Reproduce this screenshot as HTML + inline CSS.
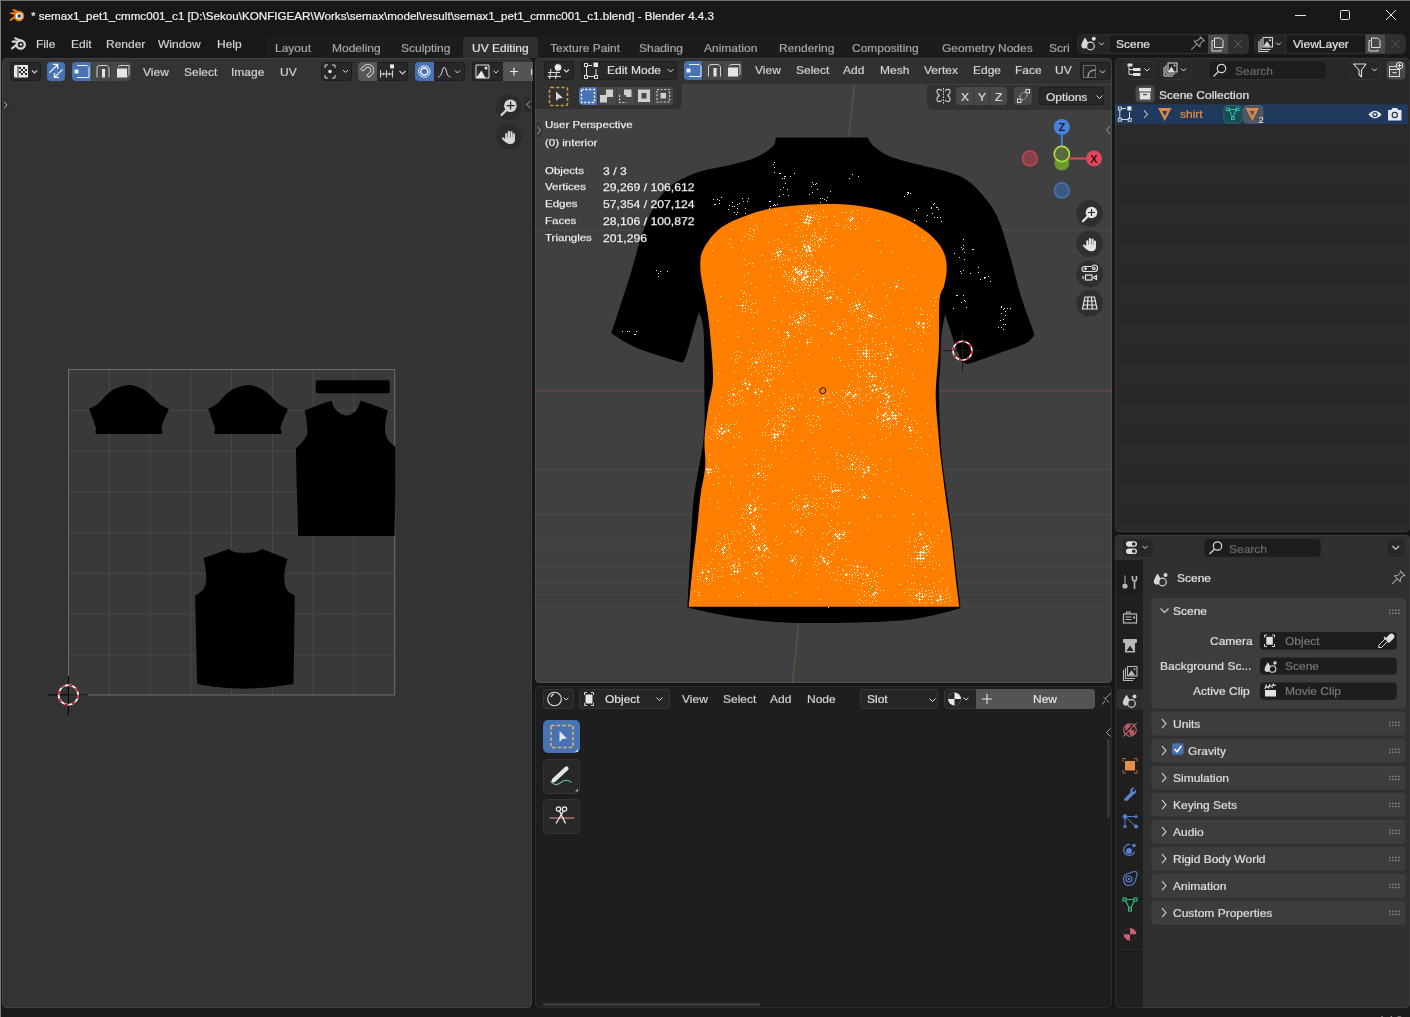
<!DOCTYPE html>
<html><head><meta charset="utf-8">
<style>
*{box-sizing:border-box;margin:0;padding:0}
html,body{width:1410px;height:1017px;overflow:hidden;background:#161616;font-family:"Liberation Sans",sans-serif;color:#d8d8d8;font-size:12px}
.a{position:absolute}
.t{position:absolute;white-space:nowrap;line-height:1;will-change:transform}
#title{left:0;top:0;width:1410px;height:29px;background:#181818;border-top:1px solid #707070}
#topbar{left:0;top:29px;width:1410px;height:29px;background:#181818}
.area{position:absolute;border-radius:4.5px;overflow:hidden}
.btn{position:absolute;border-radius:4px;height:19px}
.dk{background:#282828;box-shadow:inset 0 0 0 1px #1e1e1e}
.gr{background:#545454}
.bl{background:#4772b3}
.mt{position:absolute;will-change:transform;transform:scaleY(.88);transform-origin:0 10.16px;-webkit-text-stroke:.2px;white-space:nowrap;line-height:1;color:#d4d4d4;font-size:12px}
svg{position:absolute;overflow:visible}
</style></head><body>
<div id="title" class="a"></div>
<div id="topbar" class="a"></div>

<!-- title bar content -->
<svg style="left:0;top:0" width="40" height="60">
 <g stroke="#e87d0d" stroke-width="2.1" stroke-linecap="round" fill="none">
  <path d="M13.5 10 L18.5 12.2"/><path d="M11.2 13.3 L16 13.3"/><path d="M10.6 20 L15.3 16.5"/>
 </g>
 <circle cx="19" cy="16" r="5.2" fill="#e87d0d"/>
 <circle cx="19" cy="16" r="3.3" fill="#fff"/>
 <circle cx="19.2" cy="16" r="1.9" fill="#265787"/>
 <g stroke="#d4d4d4" stroke-width="2.1" stroke-linecap="round" fill="none">
  <path d="M15.2 38.3 L20.2 40.4"/><path d="M12.6 41.6 L17.4 41.6"/><path d="M12 48.4 L16.6 44.8"/>
  <circle cx="20.7" cy="44.6" r="4.1" stroke-width="2.3"/>
 </g>
 <circle cx="20.9" cy="44.6" r="1.3" fill="#d4d4d4"/>
</svg>
<div class="t" style="left:31px;top:10px;font-size:11.65px;color:#f2f2f2;-webkit-text-stroke:.2px">* semax1_pet1_cmmc001_c1 [D:\Sekou\KONFIGEAR\Works\semax\model\result\semax1_pet1_cmmc001_c1.blend] - Blender 4.4.3</div>
<div class="a" style="left:1295px;top:15px;width:11px;height:1px;background:#e8e8e8"></div>
<div class="a" style="left:1340px;top:10px;width:10px;height:10px;border:1px solid #e8e8e8;border-radius:1.5px"></div>
<svg style="left:1386px;top:10px" width="10" height="10"><path d="M0 0L10 10M10 0L0 10" stroke="#e8e8e8" stroke-width="1"/></svg>

<!-- top bar -->
<div class="mt" style="left:36px;top:37.7px">File</div>
<div class="mt" style="left:70.5px;top:37.7px">Edit</div>
<div class="mt" style="left:106px;top:37.7px">Render</div>
<div class="mt" style="left:158px;top:37.7px">Window</div>
<div class="mt" style="left:217px;top:37.7px">Help</div>
<div class="a" style="left:266px;top:36px;width:806px;height:22px;background:#1c1c1c;border-radius:4px 0 0 0"></div>
<div class="a" style="left:463px;top:37px;width:75px;height:21px;background:#303030;border-radius:4px 4px 0 0"></div>
<div class="mt" style="left:275px;top:41.5px;color:#a8a8a8">Layout</div>
<div class="mt" style="left:331.5px;top:41.5px;color:#a8a8a8">Modeling</div>
<div class="mt" style="left:401px;top:41.5px;color:#a8a8a8">Sculpting</div>
<div class="mt" style="left:472px;top:41.5px;color:#e4e4e4">UV Editing</div>
<div class="mt" style="left:549.5px;top:41.5px;color:#a8a8a8">Texture Paint</div>
<div class="mt" style="left:639px;top:41.5px;color:#a8a8a8">Shading</div>
<div class="mt" style="left:703.5px;top:41.5px;color:#a8a8a8">Animation</div>
<div class="mt" style="left:778.5px;top:41.5px;color:#a8a8a8">Rendering</div>
<div class="mt" style="left:852px;top:41.5px;color:#a8a8a8">Compositing</div>
<div class="mt" style="left:941.5px;top:41.5px;color:#a8a8a8">Geometry Nodes</div>
<div class="a" style="left:1049px;top:41.5px;width:20px;height:14px;overflow:hidden"><div class="mt" style="left:0;top:0;color:#a8a8a8">Scripting</div></div>

<!-- scene / viewlayer selectors -->
<svg style="left:0;top:0" width="1410" height="60">
 <rect x="1077.5" y="34.5" width="171" height="19" rx="4" fill="#1a1a1a" stroke="#333" stroke-width="1"/>
 <path d="M1081.5 34.5 H1108.8 V53.5 H1081.5 Q1077.5 53.5 1077.5 49.5 V38.5 Q1077.5 34.5 1081.5 34.5Z" fill="#252525"/>
 <rect x="1108.3" y="34.5" width="1" height="19" fill="#333"/>
 <rect x="1208.1" y="34.5" width="19.9" height="19" fill="#4a4a4a"/>
 <path d="M1228 34.5 H1244.5 Q1248.5 34.5 1248.5 38.5 V49.5 Q1248.5 53.5 1244.5 53.5 H1228Z" fill="#2f2f2f"/>
 <path d="M1085 37.5 Q1081.6 42.8 1081.4 45.3 Q1081.4 48.5 1084.6 48.5 Q1086.4 48.5 1086.9 47.4 Q1086.2 44.4 1088.2 42.7 Q1087.1 40.5 1085 37.5Z" fill="#d8d8d8"/>
 <circle cx="1090.5" cy="46" r="3.8" stroke="#d8d8d8" stroke-width="1.2" fill="none"/>
 <circle cx="1093.8" cy="38.8" r="2" fill="#d8d8d8"/>
 <path d="M1099 42.5 L1101.5 45 L1104 42.5" stroke="#d8d8d8" stroke-width="1" fill="none"/>
 <g transform="translate(1197 44) rotate(45)" stroke="#9a9a9a" stroke-width="1" fill="none" stroke-linejoin="round"><path d="M-3.8 -7.5 H3.8 M-2 -7.5 V-2.5 L-4.2 0 H4.2 L2 -2.5 V-7.5 M0 0 V8"/></g>
 <g stroke="#e0e0e0" stroke-width="1" fill="none">
  <path d="M1213.5 40.5 H1212 V51 H1221 V49.5"/>
  <path d="M1214.5 38 H1220.5 L1223 40.5 V47.5 H1214.5Z"/>
 </g>
 <path d="M1234 40 L1242 48 M1242 40 L1234 48" stroke="#5a5a5a" stroke-width="1"/>

 <rect x="1254.5" y="34.5" width="150.7" height="19" rx="4" fill="#1a1a1a" stroke="#333" stroke-width="1"/>
 <path d="M1258.5 34.5 H1285.8 V53.5 H1258.5 Q1254.5 53.5 1254.5 49.5 V38.5 Q1254.5 34.5 1258.5 34.5Z" fill="#252525"/>
 <rect x="1285.3" y="34.5" width="1" height="19" fill="#333"/>
 <rect x="1365.4" y="34.5" width="20" height="19" fill="#4a4a4a"/>
 <path d="M1385.4 34.5 H1401.2 Q1405.2 34.5 1405.2 38.5 V49.5 Q1405.2 53.5 1401.2 53.5 H1385.4Z" fill="#2f2f2f"/>
 <g stroke="#d8d8d8" stroke-width="1.1" fill="none"><path d="M1259 41 V51.5 H1268.5 M1261 39 V49.5 H1270.5"/><rect x="1263" y="37.5" width="9.5" height="9.5"/></g>
 <path d="M1263.5 46.5 L1267 41 L1270.5 46.5Z" fill="#d8d8d8"/><circle cx="1270" cy="40.2" r="1" fill="#d8d8d8"/>
 <path d="M1276 42.5 L1278.5 45 L1281 42.5" stroke="#d8d8d8" stroke-width="1" fill="none"/>
 <g stroke="#e0e0e0" stroke-width="1" fill="none">
  <path d="M1370.5 40.5 H1369 V51 H1378 V49.5"/>
  <path d="M1371.5 38 H1377.5 L1380 40.5 V47.5 H1371.5Z"/>
 </g>
 <path d="M1391.5 40 L1399.5 48 M1399.5 40 L1391.5 48" stroke="#5a5a5a" stroke-width="1"/>
</svg>
<div class="mt" style="left:1116.2px;top:37.8px;color:#e6e6e6">Scene</div>
<div class="mt" style="left:1293px;top:37.8px;color:#e6e6e6">ViewLayer</div>
<!-- Shader editor -->
<div class="area" style="left:535px;top:686px;width:577px;height:322px;background:#1e1e1e"></div>
<!-- Outliner -->
<div class="area" style="left:1115px;top:58px;width:294.5px;height:474px;background:#282828"></div>
<!-- Properties -->
<div class="area" style="left:1115px;top:535px;width:294.5px;height:473px;background:#303030"></div>
<div class="a" style="left:0;top:1008px;width:1410px;height:9px;background:#1a1a1a"></div>
<!-- UV editor -->
<div class="area" style="left:2px;top:58px;width:530px;height:950px;background:#333333"></div>

<!-- UV header -->
<div class="btn dk" style="left:9.5px;top:61.5px;width:31px;height:19px"></div>
<svg style="left:13px;top:63px" width="26" height="16" viewBox="0 0 26 16">
 <path d="M2.5 2 H15 V14.5 H2.5 Q1 14.5 1 13 V3.5 Q1 2 2.5 2Z" fill="#e6e6e6"/>
 <g fill="#282828">
  <rect x="6" y="4" width="2" height="2"/><rect x="10" y="4" width="2" height="2"/>
  <rect x="8" y="6" width="2" height="2"/><rect x="12" y="6" width="2" height="2"/>
  <rect x="6" y="8" width="2" height="2"/><rect x="10" y="8" width="2" height="2"/>
  <rect x="8" y="10" width="2" height="2"/><rect x="12" y="10" width="2" height="2"/>
  <rect x="4.5" y="3" width="1" height="11"/>
 </g>
 <path d="M19 7.5 L21.5 10 L24 7.5" stroke="#d0d0d0" stroke-width="1.1" fill="none"/>
</svg>
<div class="btn bl" style="left:47px;top:61.5px;width:18px;height:19px"></div>
<svg style="left:49px;top:63px" width="16" height="16" viewBox="0 0 16 16">
 <g stroke="#f4f4f4" stroke-width="1.3" fill="none">
  <path d="M0.5 9.6 L8.4 1.7 M4.1 1.4 H8.7 V5.8"/>
  <path d="M13.6 6.4 L5.7 14.1 M5.4 10.1 V14.4 H9.9"/>
 </g>
</svg>
<div class="btn bl" style="left:72px;top:61.5px;width:19px;height:19px;border-radius:4px 0 0 4px"></div>
<div class="btn" style="left:91px;top:61.5px;width:19.5px;height:19px;border-radius:0;background:#484848"></div>
<div class="btn" style="left:110.5px;top:61.5px;width:20px;height:19px;border-radius:0 4px 4px 0;background:#484848"></div>
<svg style="left:72px;top:61.5px" width="60" height="19" viewBox="0 0 60 19">
 <path d="M5 3.5 H15 L17 5.5 V15.5 H5" stroke="#f0f0f0" stroke-width="1" fill="none"/>
 <rect x="2.5" y="7.5" width="4" height="4" fill="#f0f0f0"/>
 <path d="M25 15.5 V6 Q25 3.5 27.5 3.5 H35 L37 5.5 V15.5" stroke="#cfcfcf" stroke-width="1" fill="none"/>
 <rect x="30" y="7" width="3" height="8.5" fill="#e6e6e6"/>
 <path d="M46 5 L48 3.5 H57 V12.5 L55 14.5" stroke="#cfcfcf" stroke-width="1" fill="none"/>
 <rect x="45" y="6.5" width="10" height="9" fill="#e6e6e6"/>
</svg>
<div class="a" style="left:90.5px;top:61.5px;width:1px;height:19px;background:#3a3a3a"></div><div class="a" style="left:110px;top:61.5px;width:1px;height:19px;background:#3a3a3a"></div>
<div class="mt" style="left:143.3px;top:66px">View</div>
<div class="mt" style="left:184.3px;top:66px">Select</div>
<div class="mt" style="left:231px;top:66px">Image</div>
<div class="mt" style="left:280px;top:66px">UV</div>

<div class="btn dk" style="left:321px;top:61.5px;width:30.5px;height:19px"></div>
<svg style="left:321px;top:61.5px" width="31" height="19" viewBox="0 0 31 19">
 <g stroke="#d8d8d8" stroke-width="1" fill="none">
  <path d="M4 6 V3 H7 M11 3 H14 V6 M14 13 V16 H11 M7 16 H4 V13"/>
  <path d="M22 8 L24.5 10.5 L27 8"/>
 </g>
 <circle cx="9" cy="9.5" r="1.8" fill="#e8e8e8"/>
</svg>
<div class="btn dk" style="left:358px;top:61.5px;width:50px;height:19px"></div>
<div class="btn gr" style="left:358px;top:61.5px;width:18.5px;height:19px;border-radius:4px 0 0 4px;background:#575757"></div>
<svg style="left:358px;top:61.5px" width="51" height="19" viewBox="0 0 51 19">
 <path transform="translate(9.9 8.2) rotate(45)" d="M-5.9 4.2 V0 A5.9 5.9 0 0 1 5.9 0 V4.2 H2.9 V0 A2.9 2.9 0 0 0 -2.9 0 V4.2 Z" stroke="#c8c8c8" stroke-width="1" fill="none"/>
 <g stroke="#d0d0d0" stroke-width="1.1" fill="none">
  <path d="M22.5 12 H34.5 M22.5 8.2 V15.6 M28.5 8.2 V15.6 M34.5 8.2 V15.6 M25.5 10.8 V13.2 M31.5 10.8 V13.2"/>
  <path d="M41.5 9 L44.5 12 L47.5 9"/>
 </g>
 <rect x="32" y="2.4" width="4" height="4" fill="#e8e8e8"/>
</svg>
<div class="btn dk" style="left:415px;top:61.5px;width:50px;height:19px"></div>
<div class="btn bl" style="left:415px;top:61.5px;width:18.5px;height:19px;border-radius:4px 0 0 4px"></div>
<svg style="left:415px;top:61.5px" width="51" height="19" viewBox="0 0 51 19">
 <circle cx="9.3" cy="9.5" r="5.8" stroke="#f0f0f0" stroke-width="1" fill="none"/>
 <circle cx="9.3" cy="9.5" r="3.6" stroke="#f0f0f0" stroke-width="1.6" fill="none"/>
 <path d="M23 15 Q26 15 27.5 8 Q29 2.5 31 8 Q32.5 15 35.5 15" stroke="#d8d8d8" stroke-width="1" fill="none"/>
 <path d="M40 8.5 L42.5 11 L45 8.5" stroke="#d8d8d8" stroke-width="1" fill="none"/>
</svg>
<div class="btn dk" style="left:472px;top:61.5px;width:35px;height:19px"></div>
<div class="btn" style="left:502.5px;top:61.5px;width:30px;height:19px;border-radius:0;background:#545454"></div>
<svg style="left:472px;top:61.5px" width="61" height="19" viewBox="0 0 61 19">
 <path d="M4 3 H17 V16 H4Z" stroke="#e0e0e0" stroke-width="1" fill="none"/>
 <path d="M4 16 L9.5 8.5 L13.5 16Z" fill="#e8e8e8"/>
 <circle cx="14" cy="6" r="1.5" fill="#e8e8e8"/>
 <path d="M21.5 8.5 L24 11 L26.5 8.5" stroke="#d8d8d8" stroke-width="1" fill="none"/>
 <path d="M38 9.5 H46 M42 5.5 V13.5" stroke="#e8e8e8" stroke-width="1.2"/>
 <rect x="59" y="7" width="1.2" height="6" fill="#d8d8d8"/>
</svg>
<div class="a" style="left:2px;top:98px;width:7px;height:14px;background:#2e2e2e;border-radius:0 4px 4px 0"></div>
<svg style="left:3px;top:101px" width="5" height="8"><path d="M1 0.5 L4 4 L1 7.5" stroke="#b0b0b0" stroke-width="1" fill="none"/></svg>
<!-- UV content -->
<svg style="left:0;top:0" width="1410" height="1017">
 <rect x="68.5" y="369.5" width="326.2" height="325.5" fill="#393939"/>
 <rect x="108.8" y="369.5" width="1" height="325.5" fill="#4a4a4a"/><rect x="68.5" y="409.8" width="326.2" height="1" fill="#4a4a4a"/><rect x="149.6" y="369.5" width="1" height="325.5" fill="#4a4a4a"/><rect x="68.5" y="450.6" width="326.2" height="1" fill="#4a4a4a"/><rect x="190.3" y="369.5" width="1" height="325.5" fill="#4a4a4a"/><rect x="68.5" y="491.3" width="326.2" height="1" fill="#4a4a4a"/><rect x="231.1" y="369.5" width="1" height="325.5" fill="#4a4a4a"/><rect x="68.5" y="532.1" width="326.2" height="1" fill="#4a4a4a"/><rect x="271.9" y="369.5" width="1" height="325.5" fill="#4a4a4a"/><rect x="68.5" y="572.9" width="326.2" height="1" fill="#4a4a4a"/><rect x="312.6" y="369.5" width="1" height="325.5" fill="#4a4a4a"/><rect x="68.5" y="613.6" width="326.2" height="1" fill="#4a4a4a"/><rect x="353.4" y="369.5" width="1" height="325.5" fill="#4a4a4a"/><rect x="68.5" y="654.4" width="326.2" height="1" fill="#4a4a4a"/>
 <rect x="68.5" y="369.5" width="326.2" height="325.5" fill="none" stroke="#6e6e6e" stroke-width="1"/>
 <path d="M89.2 408.7 C89.2 408.7 94.3 406.9 97.7 404.1 C101.1 401.3 106.1 394.8 109.8 392.0 C113.5 389.2 116.5 388.3 119.7 387.1 C122.9 385.9 125.8 384.9 128.9 384.9 C132.0 384.9 135.0 385.8 138.2 387.1 C141.4 388.4 144.6 389.9 148.1 392.7 C151.6 395.5 155.9 401.0 159.4 403.7 C162.9 406.4 169.0 409.0 169.0 409.0 C169.0 409.0 163.5 421.3 162.3 424.6 C161.1 427.9 161.6 427.7 161.6 428.9 C161.6 430.1 162.6 430.9 162.6 431.7 C162.6 432.5 161.6 433.9 161.6 433.9 C161.6 433.9 96.3 433.9 96.3 433.9 C96.3 433.9 95.2 432.6 95.2 431.7 C95.2 430.8 97.0 432.0 96.0 428.2 C95.0 424.4 89.2 408.7 89.2 408.7Z" fill="#000"/>
 <path d="M208.2 408.7 C208.2 408.7 213.3 406.9 216.7 404.1 C220.1 401.3 225.1 394.8 228.8 392.0 C232.5 389.2 235.5 388.3 238.7 387.1 C241.9 385.9 244.8 384.9 247.9 384.9 C251.0 384.9 254.0 385.8 257.2 387.1 C260.4 388.4 263.6 389.9 267.1 392.7 C270.6 395.5 274.9 401.0 278.4 403.7 C281.9 406.4 288.0 409.0 288.0 409.0 C288.0 409.0 282.5 421.3 281.3 424.6 C280.1 427.9 280.6 427.7 280.6 428.9 C280.7 430.1 281.6 430.9 281.6 431.7 C281.6 432.5 280.6 433.9 280.6 433.9 C280.6 433.9 215.3 433.9 215.3 433.9 C215.3 433.9 214.2 432.6 214.2 431.7 C214.1 430.8 216.0 432.0 215.0 428.2 C214.0 424.4 208.2 408.7 208.2 408.7Z" fill="#000"/>
 <path d="M331.3 400.6 C331.3 400.6 333.2 407.1 335.6 409.6 C338.0 412.1 342.4 415.5 345.9 415.6 C349.3 415.7 353.9 412.9 356.3 410.4 C358.8 407.9 360.6 400.6 360.6 400.6 C360.6 400.6 388.1 410.4 388.1 410.4 C388.1 410.4 385.9 417.7 385.5 421.6 C385.1 425.5 384.8 430.2 385.5 433.7 C386.2 437.1 388.2 440.1 389.8 442.3 C391.4 444.5 395.3 446.6 395.3 446.6 C395.3 446.6 395.4 475.6 395.3 490.5 C395.2 505.4 394.6 536.1 394.6 536.1 C394.6 536.1 298.3 536.1 298.3 536.1 C298.3 536.1 297.3 505.1 296.9 490.5 C296.5 475.9 296.0 448.3 296.0 448.3 C296.0 448.3 300.1 444.7 302.0 442.3 C303.9 439.9 306.5 437.4 307.2 433.7 C307.9 430.0 306.8 423.8 306.4 419.9 C306.0 416.0 304.6 410.4 304.6 410.4 C304.6 410.4 331.3 400.6 331.3 400.6Z" fill="#000"/>
 <path d="M229.0 549.1 C229.0 549.1 232.7 552.1 236.9 552.6 C241.1 553.1 250.0 552.9 254.2 552.3 C258.4 551.7 262.1 549.1 262.1 549.1 C262.1 549.1 287.5 558.9 287.5 558.9 C287.5 558.9 285.4 566.2 284.9 569.9 C284.4 573.6 284.0 577.5 284.4 580.9 C284.8 584.3 285.5 587.9 287.2 590.3 C288.9 592.7 294.8 595.4 294.8 595.4 C294.8 595.4 294.5 619.6 294.3 634.4 C294.1 649.1 293.5 683.9 293.5 683.9 C293.5 683.9 272.8 687.0 263.6 687.8 C254.4 688.6 246.3 688.7 238.5 688.6 C230.7 688.5 223.4 687.9 216.5 687.1 C209.6 686.3 197.3 683.9 197.3 683.9 C197.3 683.9 196.3 649.1 196.0 634.4 C195.7 619.7 195.2 595.8 195.2 595.8 C195.2 595.8 202.1 591.5 203.9 588.8 C205.7 586.0 205.9 582.7 206.2 579.3 C206.4 575.9 205.8 571.8 205.4 568.3 C205.0 564.8 203.6 558.1 203.6 558.1 C203.6 558.1 229.0 549.1 229.0 549.1Z" fill="#000"/>
 <rect x="315.8" y="380.3" width="74" height="12.9" rx="2.2" fill="#000"/>
 <!-- 2d cursor -->
 <path d="M48.5 694.9 H88 M68.4 675.7 V715" stroke="#000" stroke-width="1"/>
 <circle cx="68.4" cy="694.9" r="9.8" stroke="#fff" stroke-width="1.6" fill="none"/>
 <circle cx="68.4" cy="694.9" r="9.8" stroke="#c82020" stroke-width="1.6" fill="none" stroke-dasharray="3.85 3.85"/>
 <!-- nav buttons -->
 <circle cx="508.7" cy="107.1" r="12.9" fill="#2a2a2a" opacity=".85"/>
 <circle cx="508.7" cy="136.6" r="12.9" fill="#2a2a2a" opacity=".85"/>
 <circle cx="510.4" cy="105.8" r="6.3" fill="#d6d6d6"/>
 <path d="M507 109.5 L501.5 115" stroke="#d6d6d6" stroke-width="2.2" stroke-linecap="round"/>
 <path d="M510.6 101.6 V109.6 M506.6 105.6 H514.6" stroke="#1e1e1e" stroke-width="1.2"/>
 <g stroke="#d6d6d6" stroke-width="2.1" stroke-linecap="round" fill="none"><path d="M506.3 134.1 L506.3 138.6 M508.9 131.8 L508.9 138.1 M511.5 132.4 L511.5 138.1 M513.9 134.4 L513.9 139.1 M503.0 138.4 L505.9 141.2"/></g><path d="M505.3 137.6 L515.0 137.6 L514.9 140.6 Q514.5 143.9 510.2 144.0 Q506.5 144.0 505.3 141.1 Z" fill="#d6d6d6"/>
 <rect x="524" y="97" width="8" height="15" rx="3" fill="#2c2c2c"/>
 <path d="M530.5 101 L526.5 104.5 L530.5 108" stroke="#a8a8a8" stroke-width="1" fill="none"/>
</svg>
<!-- 3D viewport -->
<div class="area" style="left:535px;top:58px;width:577px;height:625px;background:#404040"></div>

<svg style="left:0;top:0" width="1410" height="1017">
 <defs><clipPath id="vpc"><rect x="535" y="58" width="577" height="625" rx="4.5"/></clipPath></defs>
 <g clip-path="url(#vpc)">
  <rect x="535" y="229.5" width="577" height="1" fill="#4a4a4a"/><rect x="535" y="468.9" width="577" height="1" fill="#4a4a4a"/><rect x="535" y="514.2" width="577" height="1" fill="#4a4a4a"/><rect x="535" y="543.5" width="577" height="1" fill="#4a4a4a"/><rect x="535" y="565.8" width="577" height="1" fill="#4a4a4a"/><rect x="535" y="581.5" width="577" height="1" fill="#4a4a4a"/><rect x="535" y="594.5" width="577" height="1" fill="#444"/><rect x="535" y="605.5" width="577" height="1" fill="#444"/>
  <rect x="535" y="390.3" width="577" height="1.3" fill="#70464c"/>
  <path d="M857 58 L792.5 683" stroke="#52703a" stroke-width="1" opacity=".85"/>
  <path d="M775.6 137.5 C775.6 137.5 867.7 137.5 867.7 137.5 C867.7 137.5 870.1 143.2 873.9 146.3 C877.6 149.5 882.5 153.3 890.2 156.4 C897.9 159.5 910.3 162.4 920.3 165.1 C930.3 167.8 942.0 169.8 950.4 172.7 C958.8 175.6 963.8 177.3 970.5 182.7 C977.2 188.1 985.6 198.2 990.6 205.3 C995.6 212.4 997.3 216.5 1000.6 225.3 C1003.9 234.1 1007.2 246.3 1010.6 258.0 C1014.0 269.7 1016.7 282.9 1020.7 295.6 C1024.7 308.3 1034.4 334.4 1034.4 334.4 C1034.4 334.4 1032.2 339.8 1025.7 343.2 C1019.2 346.6 1004.8 351.1 995.6 354.5 C986.4 357.9 970.5 363.3 970.5 363.3 C970.5 363.3 964.7 366.5 960.5 358.3 C956.3 350.1 945.2 314.2 945.2 314.2 C945.2 314.2 942.3 326.9 941.5 335.0 C940.7 343.1 940.9 353.1 940.5 363.0 C940.1 372.9 938.6 378.7 938.9 394.4 C939.1 410.1 940.4 438.9 942.0 457.3 C943.6 475.7 946.5 490.3 948.3 504.5 C950.1 518.7 951.0 525.0 953.0 542.3 C955.0 559.5 960.5 608.0 960.5 608.0 C960.5 608.0 931.9 617.5 905.7 620.0 C879.5 622.5 831.0 623.3 803.4 623.0 C775.8 622.7 759.3 620.6 740.0 618.0 C720.7 615.4 687.5 607.5 687.5 607.5 C687.5 607.5 689.9 557.8 691.0 539.0 C692.1 520.2 692.1 511.8 694.2 495.0 C696.3 478.2 701.9 455.3 703.6 438.5 C705.3 421.7 704.5 412.2 704.5 394.4 C704.5 376.6 704.5 345.1 703.6 331.5 C702.7 317.9 698.9 312.6 698.9 312.6 C698.9 312.6 697.3 317.4 695.0 325.0 C692.7 332.6 687.8 352.1 685.3 358.3 C682.8 364.5 680.3 362.0 680.3 362.0 C680.3 362.0 649.1 353.0 637.6 348.2 C626.1 343.4 611.3 333.2 611.3 333.2 C611.3 333.2 624.9 292.2 630.1 275.5 C635.3 258.8 638.0 245.4 642.6 232.8 C647.2 220.2 652.3 208.5 657.7 200.2 C663.1 191.8 668.1 187.5 675.2 182.7 C682.3 177.9 691.1 174.3 700.3 171.4 C709.5 168.5 721.2 167.4 730.4 165.1 C739.6 162.8 748.4 160.7 755.5 157.6 C762.6 154.5 769.6 149.7 773.0 146.3 C776.4 143.0 775.6 137.5 775.6 137.5Z" fill="#000"/>
  <path d="M830.0 204.0 C845.8 204.0 858.1 205.5 870.2 207.8 C882.3 210.1 893.2 213.6 902.8 217.8 C912.4 222.0 921.1 227.4 927.8 232.8 C934.5 238.2 939.8 244.5 942.9 250.4 C946.0 256.3 946.5 262.1 946.7 268.0 C946.9 273.9 945.4 280.2 944.2 285.5 C943.0 290.8 940.4 289.7 939.5 300.0 C938.6 310.3 939.5 331.5 938.9 347.2 C938.3 362.9 935.8 380.2 935.7 394.4 C935.6 408.6 937.3 420.7 938.3 432.2 C939.2 443.7 940.0 451.6 941.4 463.6 C942.8 475.7 945.0 491.9 946.7 504.5 C948.4 517.1 950.1 527.6 951.5 539.1 C952.9 550.6 953.9 562.5 955.2 573.8 C956.5 585.1 959.3 606.8 959.3 606.8 C959.3 606.8 688.8 606.8 688.8 606.8 C688.8 606.8 691.2 580.9 692.6 567.5 C694.0 554.1 696.0 538.7 697.3 526.6 C698.6 514.5 699.2 505.0 700.5 495.0 C701.8 485.0 704.5 476.2 705.2 466.8 C705.9 457.4 704.0 448.5 704.5 438.5 C705.0 428.5 706.9 417.0 708.3 407.0 C709.7 397.0 712.7 391.3 713.0 378.7 C713.3 366.1 711.0 343.8 709.9 331.5 C708.8 319.2 707.7 312.7 706.5 305.0 C705.3 297.3 703.8 291.7 702.8 285.5 C701.8 279.3 700.3 273.9 700.3 268.0 C700.3 262.1 699.9 256.7 702.8 250.4 C705.7 244.1 711.6 235.7 717.9 230.3 C724.2 224.9 730.9 221.6 740.5 217.8 C750.1 214.1 760.7 210.1 775.6 207.8 C790.5 205.5 814.2 204.0 830.0 204.0Z" fill="#ff8000"/><path d="M694 591h1v1h-1zM695 600h1v1h-1zM697 561h1v1h-1zM697 576h1v1h-1zM697 579h1v1h-1zM698 564h1v1h-1zM698 582h1v1h-1zM698 592h1v1h-1zM699 573h1v1h-1zM699 595h1v1h-1zM700 576h1v1h-1zM700 579h1v1h-1zM702 569h1v1h-1zM703 581h1v1h-1zM705 569h1v1h-1zM706 539h1v1h-1zM706 575h1v1h-1zM706 581h1v1h-1zM707 565h1v1h-1zM707 584h1v1h-1zM708 475h1v1h-1zM709 437h1v1h-1zM709 455h1v1h-1zM709 459h1v1h-1zM709 478h1v1h-1zM709 498h1v1h-1zM709 580h1v1h-1zM710 412h1v1h-1zM710 562h1v1h-1zM710 583h1v1h-1zM711 242h1v1h-1zM711 427h1v1h-1zM711 439h1v1h-1zM711 472h1v1h-1zM711 550h1v1h-1zM711 568h1v1h-1zM711 578h1v1h-1zM712 250h1v1h-1zM712 559h1v1h-1zM712 574h1v1h-1zM712 577h1v1h-1zM712 580h1v1h-1zM713 425h1v1h-1zM713 429h1v1h-1zM713 433h1v1h-1zM713 484h1v1h-1zM714 285h1v1h-1zM714 471h1v1h-1zM714 568h1v1h-1zM715 418h1v1h-1zM715 422h1v1h-1zM715 431h1v1h-1zM715 467h1v1h-1zM715 547h1v1h-1zM715 551h1v1h-1zM716 434h1v1h-1zM716 465h1v1h-1zM716 545h1v1h-1zM717 320h1v1h-1zM717 429h1v1h-1zM717 433h1v1h-1zM717 437h1v1h-1zM717 438h1v1h-1zM717 471h1v1h-1zM717 502h1v1h-1zM717 549h1v1h-1zM717 570h1v1h-1zM718 373h1v1h-1zM718 468h1v1h-1zM718 477h1v1h-1zM718 483h1v1h-1zM718 507h1v1h-1zM718 533h1v1h-1zM718 541h1v1h-1zM718 545h1v1h-1zM718 576h1v1h-1zM719 414h1v1h-1zM719 426h1v1h-1zM719 435h1v1h-1zM719 551h1v1h-1zM719 564h1v1h-1zM719 595h1v1h-1zM720 296h1v1h-1zM720 439h1v1h-1zM720 543h1v1h-1zM721 397h1v1h-1zM721 406h1v1h-1zM721 424h1v1h-1zM721 538h1v1h-1zM721 554h1v1h-1zM721 576h1v1h-1zM722 437h1v1h-1zM722 567h1v1h-1zM722 570h1v1h-1zM723 339h1v1h-1zM723 433h1v1h-1zM723 551h1v1h-1zM723 556h1v1h-1zM723 559h1v1h-1zM723 587h1v1h-1zM724 476h1v1h-1zM724 535h1v1h-1zM724 536h1v1h-1zM724 538h1v1h-1zM725 544h1v1h-1zM726 424h1v1h-1zM726 428h1v1h-1zM726 441h1v1h-1zM726 465h1v1h-1zM726 550h1v1h-1zM726 558h1v1h-1zM727 400h1v1h-1zM727 534h1v1h-1zM727 537h1v1h-1zM727 556h1v1h-1zM727 567h1v1h-1zM728 391h1v1h-1zM728 395h1v1h-1zM728 402h1v1h-1zM728 426h1v1h-1zM728 540h1v1h-1zM728 543h1v1h-1zM728 548h1v1h-1zM728 563h1v1h-1zM729 243h1v1h-1zM729 316h1v1h-1zM729 399h1v1h-1zM729 410h1v1h-1zM729 500h1v1h-1zM729 544h1v1h-1zM729 546h1v1h-1zM729 553h1v1h-1zM729 557h1v1h-1zM730 239h1v1h-1zM730 307h1v1h-1zM730 393h1v1h-1zM730 404h1v1h-1zM730 424h1v1h-1zM730 432h1v1h-1zM730 481h1v1h-1zM730 483h1v1h-1zM730 566h1v1h-1zM730 574h1v1h-1zM731 358h1v1h-1zM731 397h1v1h-1zM731 543h1v1h-1zM731 555h1v1h-1zM731 568h1v1h-1zM731 569h1v1h-1zM731 574h1v1h-1zM732 229h1v1h-1zM732 247h1v1h-1zM732 390h1v1h-1zM732 475h1v1h-1zM732 515h1v1h-1zM732 531h1v1h-1zM733 384h1v1h-1zM733 388h1v1h-1zM733 399h1v1h-1zM733 405h1v1h-1zM733 447h1v1h-1zM733 487h1v1h-1zM733 490h1v1h-1zM733 571h1v1h-1zM734 352h1v1h-1zM734 372h1v1h-1zM734 403h1v1h-1zM734 424h1v1h-1zM734 437h1v1h-1zM734 534h1v1h-1zM734 540h1v1h-1zM734 550h1v1h-1zM734 561h1v1h-1zM734 567h1v1h-1zM734 568h1v1h-1zM734 574h1v1h-1zM734 580h1v1h-1zM735 359h1v1h-1zM735 361h1v1h-1zM735 388h1v1h-1zM735 396h1v1h-1zM735 563h1v1h-1zM736 305h1v1h-1zM736 355h1v1h-1zM736 362h1v1h-1zM736 400h1v1h-1zM736 422h1v1h-1zM736 434h1v1h-1zM737 331h1v1h-1zM737 351h1v1h-1zM737 358h1v1h-1zM737 393h1v1h-1zM737 404h1v1h-1zM737 531h1v1h-1zM737 566h1v1h-1zM737 568h1v1h-1zM737 573h1v1h-1zM737 596h1v1h-1zM738 336h1v1h-1zM738 437h1v1h-1zM738 497h1v1h-1zM738 559h1v1h-1zM738 562h1v1h-1zM738 565h1v1h-1zM738 569h1v1h-1zM738 582h1v1h-1zM739 305h1v1h-1zM739 391h1v1h-1zM739 395h1v1h-1zM739 432h1v1h-1zM739 436h1v1h-1zM739 533h1v1h-1zM739 558h1v1h-1zM739 563h1v1h-1zM739 565h1v1h-1zM740 299h1v1h-1zM740 356h1v1h-1zM740 399h1v1h-1zM740 524h1v1h-1zM740 565h1v1h-1zM740 568h1v1h-1zM740 571h1v1h-1zM740 595h1v1h-1zM741 240h1v1h-1zM741 290h1v1h-1zM741 352h1v1h-1zM741 381h1v1h-1zM741 390h1v1h-1zM741 403h1v1h-1zM741 438h1v1h-1zM741 517h1v1h-1zM741 540h1v1h-1zM742 308h1v1h-1zM742 311h1v1h-1zM742 384h1v1h-1zM742 390h1v1h-1zM742 397h1v1h-1zM742 508h1v1h-1zM742 514h1v1h-1zM743 249h1v1h-1zM743 293h1v1h-1zM743 296h1v1h-1zM743 302h1v1h-1zM743 401h1v1h-1zM743 512h1v1h-1zM743 518h1v1h-1zM743 568h1v1h-1zM743 592h1v1h-1zM744 236h1v1h-1zM744 259h1v1h-1zM744 275h1v1h-1zM744 292h1v1h-1zM744 380h1v1h-1zM744 458h1v1h-1zM744 530h1v1h-1zM744 552h1v1h-1zM744 562h1v1h-1zM744 578h1v1h-1zM745 233h1v1h-1zM745 282h1v1h-1zM745 305h1v1h-1zM745 308h1v1h-1zM745 311h1v1h-1zM745 378h1v1h-1zM745 403h1v1h-1zM745 509h1v1h-1zM745 518h1v1h-1zM745 521h1v1h-1zM745 536h1v1h-1zM746 264h1v1h-1zM746 294h1v1h-1zM746 300h1v1h-1zM746 302h1v1h-1zM746 385h1v1h-1zM746 464h1v1h-1zM746 506h1v1h-1zM746 513h1v1h-1zM746 577h1v1h-1zM747 361h1v1h-1zM747 480h1v1h-1zM747 504h1v1h-1zM747 510h1v1h-1zM747 517h1v1h-1zM747 543h1v1h-1zM747 562h1v1h-1zM748 234h1v1h-1zM748 273h1v1h-1zM748 306h1v1h-1zM748 309h1v1h-1zM748 322h1v1h-1zM748 368h1v1h-1zM748 381h1v1h-1zM748 475h1v1h-1zM748 526h1v1h-1zM749 231h1v1h-1zM749 238h1v1h-1zM749 263h1v1h-1zM749 300h1v1h-1zM749 494h1v1h-1zM749 514h1v1h-1zM749 528h1v1h-1zM749 541h1v1h-1zM749 546h1v1h-1zM750 228h1v1h-1zM750 235h1v1h-1zM750 295h1v1h-1zM750 350h1v1h-1zM750 492h1v1h-1zM750 519h1v1h-1zM750 532h1v1h-1zM751 217h1v1h-1zM751 283h1v1h-1zM751 304h1v1h-1zM751 309h1v1h-1zM751 312h1v1h-1zM751 359h1v1h-1zM751 366h1v1h-1zM751 374h1v1h-1zM751 509h1v1h-1zM751 523h1v1h-1zM751 524h1v1h-1zM751 547h1v1h-1zM751 548h1v1h-1zM752 239h1v1h-1zM752 263h1v1h-1zM752 303h1v1h-1zM752 328h1v1h-1zM752 343h1v1h-1zM752 357h1v1h-1zM752 363h1v1h-1zM752 475h1v1h-1zM752 483h1v1h-1zM752 530h1v1h-1zM752 535h1v1h-1zM752 540h1v1h-1zM752 546h1v1h-1zM752 559h1v1h-1zM752 574h1v1h-1zM753 229h1v1h-1zM753 236h1v1h-1zM753 266h1v1h-1zM753 317h1v1h-1zM753 500h1v1h-1zM753 518h1v1h-1zM753 522h1v1h-1zM753 531h1v1h-1zM753 550h1v1h-1zM753 567h1v1h-1zM754 230h1v1h-1zM754 233h1v1h-1zM754 312h1v1h-1zM754 361h1v1h-1zM754 367h1v1h-1zM754 464h1v1h-1zM754 473h1v1h-1zM754 477h1v1h-1zM754 504h1v1h-1zM754 517h1v1h-1zM754 533h1v1h-1zM754 561h1v1h-1zM754 572h1v1h-1zM754 576h1v1h-1zM755 287h1v1h-1zM755 303h1v1h-1zM755 351h1v1h-1zM755 358h1v1h-1zM755 371h1v1h-1zM755 385h1v1h-1zM755 389h1v1h-1zM755 454h1v1h-1zM755 501h1v1h-1zM755 515h1v1h-1zM755 524h1v1h-1zM755 534h1v1h-1zM755 549h1v1h-1zM755 565h1v1h-1zM755 569h1v1h-1zM755 603h1v1h-1zM756 225h1v1h-1zM756 369h1v1h-1zM756 394h1v1h-1zM756 450h1v1h-1zM756 516h1v1h-1zM756 535h1v1h-1zM756 540h1v1h-1zM756 544h1v1h-1zM756 555h1v1h-1zM756 559h1v1h-1zM757 228h1v1h-1zM757 310h1v1h-1zM757 313h1v1h-1zM757 381h1v1h-1zM757 405h1v1h-1zM757 488h1v1h-1zM757 498h1v1h-1zM757 512h1v1h-1zM757 519h1v1h-1zM757 578h1v1h-1zM758 353h1v1h-1zM758 359h1v1h-1zM758 373h1v1h-1zM758 388h1v1h-1zM758 389h1v1h-1zM758 464h1v1h-1zM758 468h1v1h-1zM758 477h1v1h-1zM758 496h1v1h-1zM758 509h1v1h-1zM758 516h1v1h-1zM758 533h1v1h-1zM758 557h1v1h-1zM758 571h1v1h-1zM758 581h1v1h-1zM759 357h1v1h-1zM759 394h1v1h-1zM759 397h1v1h-1zM759 402h1v1h-1zM759 507h1v1h-1zM759 525h1v1h-1zM759 534h1v1h-1zM759 538h1v1h-1zM760 354h1v1h-1zM760 361h1v1h-1zM760 475h1v1h-1zM760 516h1v1h-1zM760 545h1v1h-1zM760 564h1v1h-1zM760 573h1v1h-1zM761 458h1v1h-1zM761 466h1v1h-1zM761 470h1v1h-1zM761 504h1v1h-1zM761 531h1v1h-1zM761 556h1v1h-1zM761 577h1v1h-1zM761 581h1v1h-1zM762 255h1v1h-1zM762 351h1v1h-1zM762 358h1v1h-1zM762 366h1v1h-1zM762 371h1v1h-1zM762 432h1v1h-1zM762 435h1v1h-1zM762 508h1v1h-1zM762 543h1v1h-1zM762 547h1v1h-1zM762 555h1v1h-1zM762 566h1v1h-1zM763 355h1v1h-1zM763 362h1v1h-1zM763 375h1v1h-1zM763 450h1v1h-1zM763 473h1v1h-1zM763 477h1v1h-1zM763 529h1v1h-1zM763 539h1v1h-1zM763 554h1v1h-1zM763 578h1v1h-1zM764 353h1v1h-1zM764 381h1v1h-1zM764 459h1v1h-1zM764 485h1v1h-1zM764 521h1v1h-1zM764 560h1v1h-1zM765 218h1v1h-1zM765 261h1v1h-1zM765 399h1v1h-1zM765 426h1v1h-1zM765 432h1v1h-1zM765 435h1v1h-1zM765 466h1v1h-1zM765 475h1v1h-1zM765 479h1v1h-1zM765 509h1v1h-1zM765 537h1v1h-1zM765 541h1v1h-1zM765 556h1v1h-1zM766 350h1v1h-1zM766 357h1v1h-1zM766 370h1v1h-1zM766 377h1v1h-1zM766 410h1v1h-1zM766 586h1v1h-1zM767 361h1v1h-1zM767 424h1v1h-1zM767 475h1v1h-1zM768 242h1v1h-1zM768 328h1v1h-1zM768 353h1v1h-1zM768 365h1v1h-1zM768 373h1v1h-1zM768 383h1v1h-1zM768 395h1v1h-1zM768 420h1v1h-1zM768 423h1v1h-1zM768 435h1v1h-1zM768 465h1v1h-1zM768 550h1v1h-1zM768 557h1v1h-1zM769 285h1v1h-1zM769 341h1v1h-1zM769 386h1v1h-1zM769 557h1v1h-1zM770 276h1v1h-1zM770 355h1v1h-1zM770 369h1v1h-1zM770 374h1v1h-1zM770 379h1v1h-1zM770 385h1v1h-1zM770 467h1v1h-1zM770 552h1v1h-1zM771 253h1v1h-1zM771 268h1v1h-1zM771 353h1v1h-1zM771 359h1v1h-1zM771 365h1v1h-1zM771 366h1v1h-1zM771 373h1v1h-1zM771 380h1v1h-1zM771 429h1v1h-1zM771 432h1v1h-1zM771 434h1v1h-1zM771 438h1v1h-1zM771 464h1v1h-1zM771 572h1v1h-1zM772 259h1v1h-1zM772 441h1v1h-1zM773 367h1v1h-1zM773 378h1v1h-1zM773 393h1v1h-1zM773 418h1v1h-1zM773 427h1v1h-1zM773 594h1v1h-1zM774 240h1v1h-1zM774 253h1v1h-1zM774 297h1v1h-1zM774 300h1v1h-1zM774 320h1v1h-1zM774 328h1v1h-1zM774 367h1v1h-1zM774 369h1v1h-1zM774 425h1v1h-1zM774 428h1v1h-1zM774 429h1v1h-1zM774 503h1v1h-1zM775 211h1v1h-1zM775 256h1v1h-1zM775 259h1v1h-1zM775 361h1v1h-1zM775 403h1v1h-1zM775 423h1v1h-1zM775 430h1v1h-1zM775 436h1v1h-1zM775 440h1v1h-1zM775 446h1v1h-1zM775 449h1v1h-1zM775 539h1v1h-1zM776 249h1v1h-1zM776 536h1v1h-1zM776 555h1v1h-1zM776 579h1v1h-1zM777 247h1v1h-1zM777 252h1v1h-1zM777 291h1v1h-1zM777 367h1v1h-1zM777 408h1v1h-1zM777 415h1v1h-1zM777 431h1v1h-1zM777 433h1v1h-1zM777 437h1v1h-1zM777 544h1v1h-1zM778 239h1v1h-1zM778 258h1v1h-1zM778 332h1v1h-1zM778 353h1v1h-1zM778 360h1v1h-1zM778 374h1v1h-1zM778 417h1v1h-1zM778 428h1v1h-1zM778 435h1v1h-1zM778 440h1v1h-1zM778 509h1v1h-1zM779 248h1v1h-1zM779 261h1v1h-1zM779 337h1v1h-1zM779 365h1v1h-1zM779 370h1v1h-1zM779 409h1v1h-1zM779 424h1v1h-1zM779 431h1v1h-1zM780 218h1v1h-1zM780 254h1v1h-1zM780 267h1v1h-1zM780 361h1v1h-1zM780 398h1v1h-1zM780 410h1v1h-1zM780 420h1v1h-1zM780 431h1v1h-1zM780 433h1v1h-1zM781 242h1v1h-1zM781 257h1v1h-1zM781 321h1v1h-1zM781 345h1v1h-1zM781 368h1v1h-1zM781 402h1v1h-1zM781 407h1v1h-1zM781 423h1v1h-1zM781 440h1v1h-1zM781 445h1v1h-1zM781 452h1v1h-1zM781 543h1v1h-1zM782 248h1v1h-1zM782 260h1v1h-1zM782 390h1v1h-1zM782 411h1v1h-1zM782 415h1v1h-1zM782 419h1v1h-1zM782 486h1v1h-1zM783 254h1v1h-1zM783 264h1v1h-1zM783 275h1v1h-1zM783 310h1v1h-1zM783 339h1v1h-1zM783 342h1v1h-1zM783 351h1v1h-1zM783 373h1v1h-1zM783 404h1v1h-1zM783 431h1v1h-1zM783 432h1v1h-1zM783 434h1v1h-1zM784 271h1v1h-1zM784 276h1v1h-1zM784 286h1v1h-1zM784 332h1v1h-1zM784 345h1v1h-1zM784 356h1v1h-1zM784 409h1v1h-1zM784 414h1v1h-1zM784 421h1v1h-1zM784 428h1v1h-1zM784 525h1v1h-1zM785 214h1v1h-1zM785 247h1v1h-1zM785 255h1v1h-1zM785 259h1v1h-1zM785 272h1v1h-1zM785 394h1v1h-1zM785 398h1v1h-1zM785 402h1v1h-1zM785 406h1v1h-1zM785 424h1v1h-1zM785 458h1v1h-1zM786 224h1v1h-1zM786 274h1v1h-1zM786 338h1v1h-1zM786 415h1v1h-1zM786 420h1v1h-1zM786 434h1v1h-1zM786 558h1v1h-1zM787 244h1v1h-1zM787 280h1v1h-1zM787 335h1v1h-1zM787 366h1v1h-1zM787 426h1v1h-1zM787 440h1v1h-1zM788 259h1v1h-1zM788 260h1v1h-1zM788 278h1v1h-1zM788 291h1v1h-1zM788 337h1v1h-1zM788 362h1v1h-1zM788 408h1v1h-1zM788 412h1v1h-1zM789 234h1v1h-1zM789 249h1v1h-1zM789 272h1v1h-1zM789 276h1v1h-1zM789 316h1v1h-1zM789 324h1v1h-1zM789 342h1v1h-1zM789 397h1v1h-1zM789 417h1v1h-1zM789 421h1v1h-1zM790 258h1v1h-1zM790 280h1v1h-1zM790 317h1v1h-1zM790 362h1v1h-1zM790 406h1v1h-1zM790 503h1v1h-1zM790 541h1v1h-1zM790 555h1v1h-1zM790 561h1v1h-1zM790 595h1v1h-1zM791 249h1v1h-1zM791 274h1v1h-1zM791 279h1v1h-1zM791 288h1v1h-1zM791 399h1v1h-1zM791 524h1v1h-1zM791 532h1v1h-1zM791 557h1v1h-1zM792 252h1v1h-1zM792 266h1v1h-1zM792 271h1v1h-1zM792 277h1v1h-1zM792 290h1v1h-1zM792 323h1v1h-1zM792 324h1v1h-1zM792 381h1v1h-1zM792 430h1v1h-1zM792 489h1v1h-1zM792 501h1v1h-1zM792 507h1v1h-1zM792 509h1v1h-1zM792 577h1v1h-1zM793 267h1v1h-1zM793 270h1v1h-1zM793 275h1v1h-1zM793 277h1v1h-1zM793 281h1v1h-1zM793 303h1v1h-1zM793 314h1v1h-1zM793 317h1v1h-1zM793 397h1v1h-1zM793 401h1v1h-1zM793 527h1v1h-1zM793 531h1v1h-1zM793 575h1v1h-1zM794 257h1v1h-1zM794 281h1v1h-1zM794 283h1v1h-1zM794 320h1v1h-1zM794 336h1v1h-1zM794 405h1v1h-1zM794 410h1v1h-1zM794 416h1v1h-1zM794 505h1v1h-1zM794 556h1v1h-1zM794 558h1v1h-1zM794 563h1v1h-1zM795 247h1v1h-1zM795 251h1v1h-1zM795 261h1v1h-1zM795 267h1v1h-1zM795 272h1v1h-1zM795 278h1v1h-1zM795 283h1v1h-1zM795 291h1v1h-1zM795 310h1v1h-1zM795 320h1v1h-1zM795 322h1v1h-1zM795 327h1v1h-1zM795 514h1v1h-1zM795 525h1v1h-1zM795 533h1v1h-1zM795 559h1v1h-1zM795 565h1v1h-1zM795 592h1v1h-1zM796 223h1v1h-1zM796 231h1v1h-1zM796 235h1v1h-1zM796 250h1v1h-1zM796 258h1v1h-1zM796 268h1v1h-1zM796 271h1v1h-1zM796 313h1v1h-1zM796 348h1v1h-1zM796 354h1v1h-1zM796 450h1v1h-1zM796 497h1v1h-1zM796 504h1v1h-1zM796 555h1v1h-1zM796 562h1v1h-1zM797 267h1v1h-1zM797 269h1v1h-1zM797 276h1v1h-1zM797 280h1v1h-1zM797 282h1v1h-1zM797 319h1v1h-1zM797 321h1v1h-1zM797 373h1v1h-1zM797 395h1v1h-1zM797 397h1v1h-1zM797 509h1v1h-1zM797 510h1v1h-1zM798 212h1v1h-1zM798 227h1v1h-1zM798 255h1v1h-1zM798 271h1v1h-1zM798 278h1v1h-1zM798 285h1v1h-1zM798 325h1v1h-1zM798 506h1v1h-1zM799 266h1v1h-1zM799 270h1v1h-1zM799 271h1v1h-1zM799 290h1v1h-1zM799 312h1v1h-1zM799 315h1v1h-1zM799 329h1v1h-1zM799 341h1v1h-1zM799 394h1v1h-1zM799 409h1v1h-1zM799 495h1v1h-1zM799 509h1v1h-1zM799 570h1v1h-1zM800 219h1v1h-1zM800 236h1v1h-1zM800 252h1v1h-1zM800 257h1v1h-1zM800 269h1v1h-1zM800 270h1v1h-1zM800 287h1v1h-1zM800 316h1v1h-1zM800 333h1v1h-1zM800 403h1v1h-1zM800 518h1v1h-1zM800 529h1v1h-1zM800 533h1v1h-1zM800 563h1v1h-1zM801 215h1v1h-1zM801 230h1v1h-1zM801 259h1v1h-1zM801 263h1v1h-1zM801 267h1v1h-1zM801 274h1v1h-1zM801 276h1v1h-1zM801 280h1v1h-1zM801 283h1v1h-1zM801 289h1v1h-1zM801 299h1v1h-1zM801 313h1v1h-1zM801 321h1v1h-1zM801 324h1v1h-1zM801 535h1v1h-1zM801 557h1v1h-1zM802 209h1v1h-1zM802 225h1v1h-1zM802 241h1v1h-1zM802 248h1v1h-1zM802 249h1v1h-1zM802 255h1v1h-1zM802 285h1v1h-1zM802 318h1v1h-1zM802 396h1v1h-1zM802 440h1v1h-1zM802 508h1v1h-1zM802 514h1v1h-1zM802 527h1v1h-1zM802 531h1v1h-1zM803 219h1v1h-1zM803 222h1v1h-1zM803 236h1v1h-1zM803 244h1v1h-1zM803 265h1v1h-1zM803 270h1v1h-1zM803 275h1v1h-1zM803 278h1v1h-1zM803 282h1v1h-1zM803 292h1v1h-1zM803 304h1v1h-1zM803 311h1v1h-1zM803 317h1v1h-1zM803 322h1v1h-1zM803 382h1v1h-1zM803 510h1v1h-1zM804 213h1v1h-1zM804 240h1v1h-1zM804 253h1v1h-1zM804 261h1v1h-1zM804 270h1v1h-1zM804 276h1v1h-1zM804 279h1v1h-1zM804 282h1v1h-1zM804 288h1v1h-1zM804 320h1v1h-1zM804 499h1v1h-1zM804 513h1v1h-1zM804 529h1v1h-1zM805 210h1v1h-1zM805 244h1v1h-1zM805 247h1v1h-1zM805 266h1v1h-1zM805 267h1v1h-1zM805 280h1v1h-1zM805 284h1v1h-1zM805 285h1v1h-1zM805 312h1v1h-1zM805 389h1v1h-1zM805 498h1v1h-1zM805 506h1v1h-1zM805 507h1v1h-1zM805 539h1v1h-1zM806 235h1v1h-1zM806 248h1v1h-1zM806 255h1v1h-1zM806 256h1v1h-1zM806 263h1v1h-1zM806 269h1v1h-1zM806 272h1v1h-1zM806 277h1v1h-1zM806 280h1v1h-1zM806 323h1v1h-1zM806 329h1v1h-1zM806 416h1v1h-1zM806 495h1v1h-1zM806 502h1v1h-1zM806 509h1v1h-1zM806 516h1v1h-1zM806 580h1v1h-1zM807 213h1v1h-1zM807 229h1v1h-1zM807 241h1v1h-1zM807 252h1v1h-1zM807 264h1v1h-1zM807 281h1v1h-1zM807 282h1v1h-1zM807 288h1v1h-1zM807 302h1v1h-1zM807 339h1v1h-1zM807 345h1v1h-1zM807 423h1v1h-1zM807 498h1v1h-1zM807 573h1v1h-1zM808 210h1v1h-1zM808 226h1v1h-1zM808 255h1v1h-1zM808 265h1v1h-1zM808 268h1v1h-1zM808 271h1v1h-1zM808 285h1v1h-1zM808 288h1v1h-1zM808 291h1v1h-1zM808 314h1v1h-1zM808 321h1v1h-1zM808 354h1v1h-1zM808 415h1v1h-1zM808 419h1v1h-1zM808 501h1v1h-1zM808 508h1v1h-1zM808 512h1v1h-1zM808 514h1v1h-1zM809 242h1v1h-1zM809 265h1v1h-1zM809 285h1v1h-1zM809 318h1v1h-1zM809 325h1v1h-1zM809 425h1v1h-1zM809 430h1v1h-1zM810 214h1v1h-1zM810 239h1v1h-1zM810 244h1v1h-1zM810 247h1v1h-1zM810 251h1v1h-1zM810 254h1v1h-1zM810 259h1v1h-1zM810 268h1v1h-1zM810 270h1v1h-1zM810 276h1v1h-1zM810 279h1v1h-1zM810 281h1v1h-1zM810 282h1v1h-1zM810 283h1v1h-1zM810 285h1v1h-1zM810 339h1v1h-1zM810 342h1v1h-1zM810 398h1v1h-1zM810 421h1v1h-1zM810 484h1v1h-1zM811 208h1v1h-1zM811 223h1v1h-1zM811 251h1v1h-1zM811 254h1v1h-1zM811 280h1v1h-1zM811 301h1v1h-1zM811 337h1v1h-1zM811 424h1v1h-1zM811 506h1v1h-1zM811 513h1v1h-1zM811 533h1v1h-1zM812 220h1v1h-1zM812 235h1v1h-1zM812 236h1v1h-1zM812 240h1v1h-1zM812 245h1v1h-1zM812 250h1v1h-1zM812 255h1v1h-1zM812 257h1v1h-1zM812 267h1v1h-1zM812 273h1v1h-1zM812 278h1v1h-1zM812 419h1v1h-1zM812 432h1v1h-1zM812 502h1v1h-1zM812 506h1v1h-1zM813 215h1v1h-1zM813 217h1v1h-1zM813 249h1v1h-1zM813 270h1v1h-1zM813 275h1v1h-1zM813 276h1v1h-1zM813 279h1v1h-1zM813 282h1v1h-1zM813 284h1v1h-1zM813 285h1v1h-1zM813 294h1v1h-1zM813 415h1v1h-1zM813 426h1v1h-1zM813 448h1v1h-1zM813 557h1v1h-1zM814 212h1v1h-1zM814 229h1v1h-1zM814 236h1v1h-1zM814 239h1v1h-1zM814 242h1v1h-1zM814 246h1v1h-1zM814 273h1v1h-1zM814 281h1v1h-1zM814 282h1v1h-1zM814 288h1v1h-1zM814 291h1v1h-1zM814 311h1v1h-1zM814 324h1v1h-1zM814 397h1v1h-1zM814 462h1v1h-1zM814 476h1v1h-1zM814 498h1v1h-1zM814 505h1v1h-1zM814 564h1v1h-1zM815 218h1v1h-1zM815 232h1v1h-1zM815 234h1v1h-1zM815 244h1v1h-1zM815 250h1v1h-1zM815 262h1v1h-1zM815 325h1v1h-1zM815 391h1v1h-1zM815 452h1v1h-1zM815 479h1v1h-1zM815 508h1v1h-1zM815 514h1v1h-1zM815 545h1v1h-1zM815 561h1v1h-1zM816 215h1v1h-1zM816 237h1v1h-1zM816 270h1v1h-1zM816 271h1v1h-1zM816 276h1v1h-1zM816 388h1v1h-1zM816 420h1v1h-1zM816 424h1v1h-1zM816 499h1v1h-1zM816 503h1v1h-1zM816 510h1v1h-1zM816 558h1v1h-1zM816 574h1v1h-1zM817 240h1v1h-1zM817 279h1v1h-1zM817 288h1v1h-1zM817 291h1v1h-1zM817 397h1v1h-1zM817 400h1v1h-1zM817 416h1v1h-1zM817 458h1v1h-1zM817 549h1v1h-1zM817 565h1v1h-1zM818 219h1v1h-1zM818 222h1v1h-1zM818 241h1v1h-1zM818 244h1v1h-1zM818 247h1v1h-1zM818 269h1v1h-1zM818 273h1v1h-1zM818 276h1v1h-1zM818 293h1v1h-1zM818 315h1v1h-1zM818 345h1v1h-1zM818 406h1v1h-1zM818 416h1v1h-1zM818 473h1v1h-1zM818 476h1v1h-1zM818 479h1v1h-1zM818 506h1v1h-1zM818 562h1v1h-1zM818 569h1v1h-1zM818 588h1v1h-1zM819 216h1v1h-1zM819 237h1v1h-1zM819 245h1v1h-1zM819 246h1v1h-1zM819 277h1v1h-1zM819 278h1v1h-1zM819 281h1v1h-1zM819 418h1v1h-1zM819 486h1v1h-1zM820 225h1v1h-1zM820 266h1v1h-1zM820 398h1v1h-1zM820 425h1v1h-1zM820 428h1v1h-1zM820 485h1v1h-1zM820 498h1v1h-1zM820 556h1v1h-1zM820 563h1v1h-1zM820 599h1v1h-1zM821 242h1v1h-1zM821 266h1v1h-1zM821 289h1v1h-1zM821 473h1v1h-1zM821 476h1v1h-1zM821 554h1v1h-1zM821 556h1v1h-1zM822 236h1v1h-1zM822 275h1v1h-1zM822 281h1v1h-1zM822 283h1v1h-1zM822 284h1v1h-1zM822 287h1v1h-1zM822 328h1v1h-1zM822 401h1v1h-1zM822 404h1v1h-1zM822 489h1v1h-1zM822 508h1v1h-1zM822 514h1v1h-1zM822 538h1v1h-1zM822 551h1v1h-1zM822 560h1v1h-1zM823 210h1v1h-1zM823 217h1v1h-1zM823 257h1v1h-1zM823 290h1v1h-1zM823 395h1v1h-1zM823 402h1v1h-1zM823 482h1v1h-1zM823 498h1v1h-1zM823 503h1v1h-1zM823 533h1v1h-1zM824 232h1v1h-1zM824 238h1v1h-1zM824 242h1v1h-1zM824 276h1v1h-1zM824 295h1v1h-1zM824 298h1v1h-1zM824 393h1v1h-1zM824 476h1v1h-1zM824 479h1v1h-1zM825 235h1v1h-1zM825 278h1v1h-1zM825 304h1v1h-1zM825 488h1v1h-1zM826 216h1v1h-1zM826 228h1v1h-1zM826 231h1v1h-1zM826 238h1v1h-1zM826 495h1v1h-1zM826 516h1v1h-1zM826 534h1v1h-1zM826 549h1v1h-1zM826 565h1v1h-1zM826 571h1v1h-1zM827 272h1v1h-1zM827 292h1v1h-1zM827 393h1v1h-1zM827 462h1v1h-1zM827 477h1v1h-1zM827 503h1v1h-1zM827 506h1v1h-1zM827 556h1v1h-1zM828 275h1v1h-1zM828 280h1v1h-1zM828 301h1v1h-1zM828 402h1v1h-1zM828 523h1v1h-1zM828 532h1v1h-1zM828 544h1v1h-1zM828 545h1v1h-1zM828 560h1v1h-1zM829 269h1v1h-1zM829 290h1v1h-1zM829 331h1v1h-1zM829 397h1v1h-1zM829 497h1v1h-1zM829 557h1v1h-1zM829 562h1v1h-1zM829 567h1v1h-1zM829 573h1v1h-1zM830 267h1v1h-1zM830 291h1v1h-1zM830 402h1v1h-1zM830 526h1v1h-1zM830 530h1v1h-1zM830 543h1v1h-1zM831 236h1v1h-1zM831 246h1v1h-1zM831 303h1v1h-1zM831 339h1v1h-1zM831 447h1v1h-1zM831 482h1v1h-1zM831 485h1v1h-1zM831 487h1v1h-1zM831 488h1v1h-1zM831 504h1v1h-1zM831 520h1v1h-1zM831 554h1v1h-1zM831 561h1v1h-1zM831 577h1v1h-1zM832 245h1v1h-1zM832 291h1v1h-1zM832 358h1v1h-1zM832 392h1v1h-1zM832 497h1v1h-1zM832 536h1v1h-1zM832 553h1v1h-1zM833 272h1v1h-1zM833 294h1v1h-1zM833 321h1v1h-1zM833 330h1v1h-1zM833 394h1v1h-1zM833 414h1v1h-1zM833 506h1v1h-1zM833 528h1v1h-1zM833 555h1v1h-1zM833 572h1v1h-1zM834 216h1v1h-1zM834 282h1v1h-1zM834 334h1v1h-1zM834 407h1v1h-1zM834 484h1v1h-1zM834 487h1v1h-1zM834 508h1v1h-1zM834 538h1v1h-1zM834 541h1v1h-1zM834 550h1v1h-1zM834 580h1v1h-1zM835 225h1v1h-1zM835 239h1v1h-1zM835 484h1v1h-1zM835 530h1v1h-1zM836 223h1v1h-1zM836 296h1v1h-1zM836 392h1v1h-1zM836 405h1v1h-1zM836 453h1v1h-1zM836 455h1v1h-1zM836 459h1v1h-1zM836 502h1v1h-1zM836 579h1v1h-1zM837 299h1v1h-1zM837 323h1v1h-1zM837 326h1v1h-1zM837 329h1v1h-1zM837 452h1v1h-1zM837 463h1v1h-1zM837 468h1v1h-1zM837 487h1v1h-1zM837 508h1v1h-1zM837 513h1v1h-1zM837 524h1v1h-1zM837 532h1v1h-1zM837 541h1v1h-1zM837 547h1v1h-1zM837 571h1v1h-1zM837 574h1v1h-1zM838 225h1v1h-1zM838 297h1v1h-1zM838 419h1v1h-1zM838 429h1v1h-1zM838 496h1v1h-1zM838 567h1v1h-1zM839 326h1v1h-1zM839 328h1v1h-1zM839 357h1v1h-1zM839 502h1v1h-1zM839 506h1v1h-1zM839 530h1v1h-1zM840 299h1v1h-1zM840 327h1v1h-1zM840 329h1v1h-1zM840 360h1v1h-1zM840 396h1v1h-1zM840 455h1v1h-1zM840 484h1v1h-1zM840 487h1v1h-1zM840 490h1v1h-1zM840 574h1v1h-1zM840 580h1v1h-1zM840 588h1v1h-1zM841 286h1v1h-1zM841 302h1v1h-1zM841 532h1v1h-1zM842 212h1v1h-1zM842 323h1v1h-1zM842 390h1v1h-1zM842 398h1v1h-1zM842 403h1v1h-1zM842 411h1v1h-1zM842 456h1v1h-1zM842 559h1v1h-1zM842 569h1v1h-1zM843 326h1v1h-1zM843 413h1v1h-1zM843 461h1v1h-1zM843 465h1v1h-1zM843 489h1v1h-1zM843 522h1v1h-1zM843 530h1v1h-1zM843 538h1v1h-1zM843 570h1v1h-1zM843 571h1v1h-1zM843 577h1v1h-1zM844 227h1v1h-1zM844 319h1v1h-1zM844 337h1v1h-1zM844 366h1v1h-1zM844 398h1v1h-1zM844 469h1v1h-1zM844 492h1v1h-1zM844 532h1v1h-1zM845 322h1v1h-1zM845 338h1v1h-1zM845 349h1v1h-1zM845 392h1v1h-1zM845 396h1v1h-1zM845 401h1v1h-1zM845 532h1v1h-1zM845 536h1v1h-1zM845 541h1v1h-1zM845 575h1v1h-1zM846 212h1v1h-1zM846 220h1v1h-1zM846 225h1v1h-1zM846 325h1v1h-1zM846 331h1v1h-1zM846 467h1v1h-1zM846 559h1v1h-1zM846 565h1v1h-1zM846 583h1v1h-1zM847 390h1v1h-1zM847 403h1v1h-1zM847 411h1v1h-1zM847 456h1v1h-1zM847 491h1v1h-1zM848 218h1v1h-1zM848 227h1v1h-1zM848 289h1v1h-1zM848 292h1v1h-1zM848 311h1v1h-1zM848 344h1v1h-1zM848 365h1v1h-1zM848 386h1v1h-1zM848 406h1v1h-1zM848 414h1v1h-1zM848 437h1v1h-1zM848 454h1v1h-1zM848 469h1v1h-1zM848 483h1v1h-1zM848 523h1v1h-1zM849 304h1v1h-1zM849 384h1v1h-1zM849 401h1v1h-1zM849 405h1v1h-1zM849 458h1v1h-1zM849 489h1v1h-1zM849 532h1v1h-1zM849 541h1v1h-1zM849 565h1v1h-1zM849 571h1v1h-1zM849 574h1v1h-1zM849 580h1v1h-1zM849 583h1v1h-1zM850 212h1v1h-1zM850 216h1v1h-1zM850 225h1v1h-1zM850 229h1v1h-1zM850 307h1v1h-1zM850 344h1v1h-1zM850 407h1v1h-1zM850 466h1v1h-1zM850 468h1v1h-1zM850 522h1v1h-1zM851 310h1v1h-1zM851 359h1v1h-1zM851 368h1v1h-1zM851 381h1v1h-1zM851 394h1v1h-1zM851 398h1v1h-1zM851 415h1v1h-1zM851 455h1v1h-1zM851 459h1v1h-1zM851 460h1v1h-1zM851 569h1v1h-1zM851 575h1v1h-1zM852 210h1v1h-1zM852 303h1v1h-1zM852 313h1v1h-1zM852 328h1v1h-1zM852 444h1v1h-1zM852 468h1v1h-1zM852 469h1v1h-1zM852 495h1v1h-1zM852 565h1v1h-1zM852 574h1v1h-1zM852 577h1v1h-1zM852 580h1v1h-1zM853 306h1v1h-1zM853 388h1v1h-1zM853 400h1v1h-1zM853 457h1v1h-1zM853 477h1v1h-1zM854 278h1v1h-1zM854 309h1v1h-1zM854 311h1v1h-1zM854 362h1v1h-1zM854 462h1v1h-1zM854 566h1v1h-1zM854 569h1v1h-1zM854 572h1v1h-1zM854 589h1v1h-1zM855 225h1v1h-1zM855 229h1v1h-1zM855 293h1v1h-1zM855 302h1v1h-1zM855 390h1v1h-1zM855 398h1v1h-1zM855 403h1v1h-1zM855 455h1v1h-1zM855 462h1v1h-1zM855 469h1v1h-1zM855 472h1v1h-1zM855 560h1v1h-1zM855 574h1v1h-1zM856 305h1v1h-1zM856 315h1v1h-1zM856 459h1v1h-1zM856 467h1v1h-1zM857 210h1v1h-1zM857 214h1v1h-1zM857 222h1v1h-1zM857 227h1v1h-1zM857 274h1v1h-1zM857 321h1v1h-1zM857 341h1v1h-1zM857 347h1v1h-1zM857 350h1v1h-1zM857 353h1v1h-1zM857 359h1v1h-1zM857 373h1v1h-1zM857 375h1v1h-1zM857 388h1v1h-1zM857 396h1v1h-1zM857 423h1v1h-1zM857 498h1v1h-1zM857 569h1v1h-1zM857 570h1v1h-1zM857 572h1v1h-1zM857 575h1v1h-1zM857 581h1v1h-1zM857 601h1v1h-1zM858 299h1v1h-1zM858 301h1v1h-1zM858 318h1v1h-1zM858 349h1v1h-1zM858 354h1v1h-1zM858 377h1v1h-1zM858 458h1v1h-1zM858 465h1v1h-1zM858 575h1v1h-1zM858 578h1v1h-1zM858 594h1v1h-1zM859 328h1v1h-1zM859 337h1v1h-1zM859 381h1v1h-1zM859 390h1v1h-1zM859 394h1v1h-1zM859 398h1v1h-1zM859 403h1v1h-1zM859 467h1v1h-1zM859 469h1v1h-1zM859 496h1v1h-1zM859 599h1v1h-1zM859 603h1v1h-1zM860 307h1v1h-1zM860 335h1v1h-1zM860 341h1v1h-1zM860 350h1v1h-1zM860 356h1v1h-1zM860 359h1v1h-1zM860 365h1v1h-1zM860 367h1v1h-1zM860 376h1v1h-1zM860 388h1v1h-1zM860 461h1v1h-1zM860 464h1v1h-1zM860 567h1v1h-1zM860 573h1v1h-1zM861 218h1v1h-1zM861 310h1v1h-1zM861 319h1v1h-1zM861 452h1v1h-1zM861 561h1v1h-1zM861 574h1v1h-1zM861 577h1v1h-1zM861 585h1v1h-1zM861 590h1v1h-1zM861 600h1v1h-1zM862 294h1v1h-1zM862 306h1v1h-1zM862 326h1v1h-1zM862 400h1v1h-1zM862 405h1v1h-1zM862 468h1v1h-1zM862 476h1v1h-1zM862 490h1v1h-1zM862 494h1v1h-1zM862 497h1v1h-1zM862 583h1v1h-1zM863 271h1v1h-1zM863 309h1v1h-1zM863 313h1v1h-1zM863 338h1v1h-1zM863 347h1v1h-1zM863 350h1v1h-1zM863 359h1v1h-1zM863 362h1v1h-1zM863 365h1v1h-1zM863 370h1v1h-1zM863 462h1v1h-1zM863 465h1v1h-1zM863 469h1v1h-1zM863 475h1v1h-1zM863 477h1v1h-1zM863 496h1v1h-1zM863 567h1v1h-1zM863 570h1v1h-1zM863 573h1v1h-1zM863 579h1v1h-1zM863 583h1v1h-1zM863 602h1v1h-1zM864 302h1v1h-1zM864 310h1v1h-1zM864 320h1v1h-1zM864 459h1v1h-1zM864 493h1v1h-1zM864 591h1v1h-1zM864 595h1v1h-1zM865 305h1v1h-1zM865 317h1v1h-1zM865 327h1v1h-1zM865 469h1v1h-1zM865 579h1v1h-1zM865 585h1v1h-1zM865 600h1v1h-1zM866 289h1v1h-1zM866 324h1v1h-1zM866 332h1v1h-1zM866 338h1v1h-1zM866 344h1v1h-1zM866 347h1v1h-1zM866 353h1v1h-1zM866 359h1v1h-1zM866 370h1v1h-1zM866 376h1v1h-1zM866 381h1v1h-1zM866 387h1v1h-1zM866 394h1v1h-1zM866 396h1v1h-1zM866 456h1v1h-1zM866 466h1v1h-1zM866 495h1v1h-1zM866 567h1v1h-1zM866 573h1v1h-1zM866 582h1v1h-1zM866 593h1v1h-1zM867 220h1v1h-1zM867 308h1v1h-1zM867 311h1v1h-1zM867 321h1v1h-1zM867 472h1v1h-1zM867 518h1v1h-1zM867 576h1v1h-1zM868 318h1v1h-1zM868 378h1v1h-1zM868 400h1v1h-1zM868 458h1v1h-1zM868 497h1v1h-1zM868 529h1v1h-1zM868 578h1v1h-1zM868 591h1v1h-1zM869 217h1v1h-1zM869 301h1v1h-1zM869 312h1v1h-1zM869 324h1v1h-1zM869 350h1v1h-1zM869 353h1v1h-1zM869 356h1v1h-1zM869 358h1v1h-1zM869 359h1v1h-1zM869 362h1v1h-1zM869 364h1v1h-1zM869 376h1v1h-1zM869 382h1v1h-1zM869 385h1v1h-1zM869 443h1v1h-1zM869 488h1v1h-1zM869 573h1v1h-1zM869 581h1v1h-1zM869 584h1v1h-1zM869 595h1v1h-1zM870 386h1v1h-1zM870 387h1v1h-1zM870 393h1v1h-1zM870 398h1v1h-1zM870 423h1v1h-1zM870 473h1v1h-1zM870 588h1v1h-1zM870 603h1v1h-1zM871 319h1v1h-1zM871 380h1v1h-1zM871 397h1v1h-1zM871 480h1v1h-1zM871 578h1v1h-1zM871 581h1v1h-1zM871 586h1v1h-1zM871 596h1v1h-1zM872 286h1v1h-1zM872 313h1v1h-1zM872 338h1v1h-1zM872 341h1v1h-1zM872 350h1v1h-1zM872 356h1v1h-1zM872 377h1v1h-1zM872 379h1v1h-1zM872 384h1v1h-1zM872 420h1v1h-1zM872 464h1v1h-1zM872 571h1v1h-1zM872 586h1v1h-1zM872 601h1v1h-1zM873 322h1v1h-1zM873 474h1v1h-1zM874 317h1v1h-1zM874 354h1v1h-1zM874 364h1v1h-1zM874 392h1v1h-1zM874 435h1v1h-1zM874 577h1v1h-1zM874 580h1v1h-1zM874 598h1v1h-1zM875 314h1v1h-1zM875 326h1v1h-1zM875 344h1v1h-1zM875 356h1v1h-1zM875 359h1v1h-1zM875 373h1v1h-1zM875 376h1v1h-1zM875 379h1v1h-1zM875 465h1v1h-1zM875 474h1v1h-1zM875 581h1v1h-1zM875 596h1v1h-1zM876 333h1v1h-1zM876 376h1v1h-1zM876 414h1v1h-1zM876 417h1v1h-1zM876 573h1v1h-1zM876 585h1v1h-1zM876 589h1v1h-1zM876 600h1v1h-1zM877 318h1v1h-1zM877 353h1v1h-1zM877 386h1v1h-1zM877 397h1v1h-1zM877 408h1v1h-1zM877 410h1v1h-1zM877 416h1v1h-1zM877 418h1v1h-1zM877 422h1v1h-1zM877 469h1v1h-1zM877 516h1v1h-1zM877 576h1v1h-1zM877 589h1v1h-1zM877 593h1v1h-1zM878 240h1v1h-1zM878 324h1v1h-1zM878 353h1v1h-1zM878 391h1v1h-1zM878 412h1v1h-1zM878 416h1v1h-1zM878 582h1v1h-1zM878 587h1v1h-1zM879 344h1v1h-1zM879 365h1v1h-1zM879 395h1v1h-1zM879 496h1v1h-1zM880 252h1v1h-1zM880 318h1v1h-1zM880 353h1v1h-1zM880 368h1v1h-1zM880 381h1v1h-1zM880 401h1v1h-1zM880 402h1v1h-1zM880 406h1v1h-1zM880 414h1v1h-1zM880 429h1v1h-1zM880 458h1v1h-1zM880 516h1v1h-1zM880 568h1v1h-1zM880 590h1v1h-1zM881 214h1v1h-1zM881 308h1v1h-1zM881 343h1v1h-1zM881 356h1v1h-1zM881 359h1v1h-1zM881 385h1v1h-1zM881 418h1v1h-1zM881 422h1v1h-1zM881 439h1v1h-1zM882 393h1v1h-1zM882 407h1v1h-1zM882 426h1v1h-1zM882 575h1v1h-1zM883 352h1v1h-1zM883 383h1v1h-1zM883 393h1v1h-1zM883 400h1v1h-1zM883 424h1v1h-1zM883 481h1v1h-1zM883 590h1v1h-1zM884 283h1v1h-1zM884 316h1v1h-1zM884 358h1v1h-1zM884 373h1v1h-1zM884 380h1v1h-1zM884 387h1v1h-1zM884 392h1v1h-1zM884 407h1v1h-1zM885 245h1v1h-1zM885 305h1v1h-1zM885 327h1v1h-1zM885 341h1v1h-1zM885 343h1v1h-1zM885 346h1v1h-1zM885 377h1v1h-1zM885 388h1v1h-1zM885 391h1v1h-1zM885 398h1v1h-1zM885 403h1v1h-1zM885 417h1v1h-1zM885 438h1v1h-1zM886 297h1v1h-1zM886 343h1v1h-1zM886 349h1v1h-1zM886 367h1v1h-1zM886 403h1v1h-1zM886 405h1v1h-1zM886 407h1v1h-1zM886 411h1v1h-1zM886 413h1v1h-1zM886 416h1v1h-1zM886 419h1v1h-1zM886 426h1v1h-1zM886 471h1v1h-1zM887 217h1v1h-1zM887 295h1v1h-1zM887 355h1v1h-1zM887 386h1v1h-1zM887 415h1v1h-1zM888 361h1v1h-1zM888 364h1v1h-1zM888 392h1v1h-1zM888 395h1v1h-1zM888 408h1v1h-1zM888 423h1v1h-1zM888 428h1v1h-1zM888 546h1v1h-1zM889 302h1v1h-1zM889 351h1v1h-1zM889 396h1v1h-1zM889 406h1v1h-1zM889 409h1v1h-1zM889 415h1v1h-1zM889 417h1v1h-1zM890 287h1v1h-1zM890 348h1v1h-1zM890 395h1v1h-1zM890 421h1v1h-1zM890 425h1v1h-1zM890 427h1v1h-1zM890 433h1v1h-1zM890 460h1v1h-1zM890 469h1v1h-1zM891 345h1v1h-1zM891 377h1v1h-1zM891 386h1v1h-1zM891 401h1v1h-1zM891 415h1v1h-1zM891 564h1v1h-1zM892 251h1v1h-1zM892 348h1v1h-1zM892 351h1v1h-1zM892 385h1v1h-1zM892 418h1v1h-1zM892 419h1v1h-1zM892 484h1v1h-1zM893 337h1v1h-1zM893 357h1v1h-1zM893 393h1v1h-1zM893 404h1v1h-1zM893 417h1v1h-1zM893 424h1v1h-1zM894 282h1v1h-1zM894 326h1v1h-1zM894 400h1v1h-1zM894 515h1v1h-1zM895 289h1v1h-1zM895 366h1v1h-1zM895 409h1v1h-1zM895 496h1v1h-1zM895 595h1v1h-1zM896 356h1v1h-1zM896 421h1v1h-1zM896 423h1v1h-1zM896 424h1v1h-1zM897 283h1v1h-1zM897 373h1v1h-1zM897 405h1v1h-1zM898 280h1v1h-1zM898 393h1v1h-1zM898 406h1v1h-1zM898 412h1v1h-1zM898 415h1v1h-1zM898 421h1v1h-1zM898 476h1v1h-1zM899 325h1v1h-1zM899 413h1v1h-1zM900 362h1v1h-1zM900 397h1v1h-1zM900 403h1v1h-1zM900 414h1v1h-1zM900 584h1v1h-1zM901 394h1v1h-1zM901 409h1v1h-1zM901 415h1v1h-1zM901 488h1v1h-1zM902 288h1v1h-1zM902 308h1v1h-1zM902 368h1v1h-1zM902 390h1v1h-1zM902 391h1v1h-1zM903 285h1v1h-1zM903 313h1v1h-1zM903 388h1v1h-1zM903 429h1v1h-1zM904 225h1v1h-1zM904 339h1v1h-1zM904 392h1v1h-1zM904 419h1v1h-1zM904 426h1v1h-1zM904 491h1v1h-1zM904 565h1v1h-1zM904 592h1v1h-1zM905 422h1v1h-1zM905 425h1v1h-1zM905 437h1v1h-1zM906 328h1v1h-1zM906 396h1v1h-1zM907 268h1v1h-1zM907 417h1v1h-1zM907 419h1v1h-1zM907 431h1v1h-1zM907 581h1v1h-1zM907 589h1v1h-1zM908 549h1v1h-1zM908 555h1v1h-1zM909 408h1v1h-1zM909 537h1v1h-1zM909 541h1v1h-1zM910 328h1v1h-1zM910 344h1v1h-1zM910 433h1v1h-1zM910 448h1v1h-1zM910 589h1v1h-1zM910 595h1v1h-1zM910 601h1v1h-1zM911 421h1v1h-1zM911 424h1v1h-1zM911 436h1v1h-1zM911 495h1v1h-1zM911 558h1v1h-1zM911 561h1v1h-1zM911 583h1v1h-1zM912 374h1v1h-1zM912 427h1v1h-1zM912 514h1v1h-1zM912 524h1v1h-1zM912 575h1v1h-1zM912 603h1v1h-1zM913 276h1v1h-1zM913 351h1v1h-1zM913 378h1v1h-1zM913 430h1v1h-1zM913 513h1v1h-1zM913 589h1v1h-1zM913 592h1v1h-1zM913 598h1v1h-1zM914 332h1v1h-1zM914 444h1v1h-1zM914 541h1v1h-1zM914 546h1v1h-1zM914 552h1v1h-1zM914 558h1v1h-1zM914 561h1v1h-1zM914 567h1v1h-1zM914 583h1v1h-1zM915 236h1v1h-1zM915 289h1v1h-1zM915 420h1v1h-1zM915 538h1v1h-1zM915 551h1v1h-1zM916 308h1v1h-1zM916 321h1v1h-1zM916 325h1v1h-1zM916 432h1v1h-1zM916 440h1v1h-1zM916 540h1v1h-1zM916 547h1v1h-1zM916 589h1v1h-1zM916 598h1v1h-1zM917 349h1v1h-1zM917 423h1v1h-1zM917 430h1v1h-1zM917 447h1v1h-1zM917 552h1v1h-1zM917 555h1v1h-1zM917 561h1v1h-1zM918 327h1v1h-1zM918 462h1v1h-1zM918 536h1v1h-1zM918 543h1v1h-1zM919 321h1v1h-1zM919 532h1v1h-1zM919 539h1v1h-1zM919 552h1v1h-1zM919 590h1v1h-1zM919 596h1v1h-1zM919 602h1v1h-1zM920 308h1v1h-1zM920 314h1v1h-1zM920 335h1v1h-1zM920 343h1v1h-1zM920 437h1v1h-1zM920 501h1v1h-1zM920 549h1v1h-1zM920 561h1v1h-1zM920 564h1v1h-1zM920 584h1v1h-1zM921 325h1v1h-1zM921 414h1v1h-1zM921 448h1v1h-1zM921 531h1v1h-1zM921 538h1v1h-1zM921 551h1v1h-1zM921 591h1v1h-1zM922 237h1v1h-1zM922 310h1v1h-1zM922 314h1v1h-1zM922 350h1v1h-1zM922 538h1v1h-1zM922 561h1v1h-1zM922 588h1v1h-1zM922 593h1v1h-1zM922 599h1v1h-1zM923 331h1v1h-1zM923 549h1v1h-1zM923 555h1v1h-1zM923 567h1v1h-1zM924 240h1v1h-1zM924 533h1v1h-1zM924 543h1v1h-1zM924 550h1v1h-1zM924 594h1v1h-1zM925 333h1v1h-1zM925 513h1v1h-1zM925 523h1v1h-1zM925 553h1v1h-1zM925 567h1v1h-1zM925 576h1v1h-1zM925 590h1v1h-1zM925 596h1v1h-1zM925 602h1v1h-1zM926 549h1v1h-1zM926 552h1v1h-1zM926 555h1v1h-1zM926 591h1v1h-1zM926 594h1v1h-1zM927 314h1v1h-1zM927 319h1v1h-1zM927 323h1v1h-1zM927 327h1v1h-1zM927 423h1v1h-1zM927 454h1v1h-1zM927 535h1v1h-1zM927 549h1v1h-1zM927 555h1v1h-1zM928 545h1v1h-1zM928 551h1v1h-1zM928 590h1v1h-1zM928 596h1v1h-1zM928 599h1v1h-1zM929 247h1v1h-1zM929 321h1v1h-1zM929 325h1v1h-1zM929 333h1v1h-1zM929 538h1v1h-1zM929 549h1v1h-1zM929 552h1v1h-1zM929 561h1v1h-1zM929 564h1v1h-1zM929 584h1v1h-1zM929 593h1v1h-1zM930 301h1v1h-1zM930 436h1v1h-1zM930 541h1v1h-1zM930 547h1v1h-1zM930 596h1v1h-1zM931 314h1v1h-1zM931 543h1v1h-1zM931 590h1v1h-1zM931 596h1v1h-1zM931 599h1v1h-1zM931 602h1v1h-1zM932 546h1v1h-1zM932 561h1v1h-1zM932 592h1v1h-1zM932 602h1v1h-1zM933 305h1v1h-1zM933 316h1v1h-1zM933 429h1v1h-1zM933 450h1v1h-1zM933 526h1v1h-1zM933 556h1v1h-1zM933 568h1v1h-1zM933 583h1v1h-1zM933 595h1v1h-1zM934 297h1v1h-1zM934 501h1v1h-1zM934 542h1v1h-1zM934 586h1v1h-1zM934 588h1v1h-1zM935 301h1v1h-1zM935 310h1v1h-1zM935 591h1v1h-1zM936 296h1v1h-1zM936 464h1v1h-1zM936 563h1v1h-1zM936 594h1v1h-1zM937 487h1v1h-1zM937 535h1v1h-1zM938 538h1v1h-1zM938 591h1v1h-1zM938 603h1v1h-1zM939 564h1v1h-1zM939 565h1v1h-1zM939 581h1v1h-1zM939 594h1v1h-1zM940 600h1v1h-1zM941 531h1v1h-1zM941 590h1v1h-1zM941 602h1v1h-1zM942 530h1v1h-1zM942 569h1v1h-1zM942 578h1v1h-1zM942 593h1v1h-1zM943 513h1v1h-1zM943 599h1v1h-1zM944 602h1v1h-1zM945 595h1v1h-1zM946 590h1v1h-1zM946 598h1v1h-1zM947 588h1v1h-1zM948 594h1v1h-1zM949 597h1v1h-1zM950 600h1v1h-1z" fill="#ffe2b4"/><path d="M701 572h3v1h-3zM702 571h1v3h-1zM705 578h3v1h-3zM706 577h1v3h-1zM706 469h3v1h-3zM707 468h1v3h-1zM707 472h3v1h-3zM708 471h1v3h-1zM707 571h3v1h-3zM708 570h1v3h-1zM709 469h3v1h-3zM710 468h1v3h-1zM718 431h3v1h-3zM719 430h1v3h-1zM720 428h3v1h-3zM721 427h1v3h-1zM721 433h3v1h-3zM722 432h1v3h-1zM721 549h3v1h-3zM722 548h1v3h-1zM722 552h3v1h-3zM723 551h1v3h-1zM723 431h3v1h-3zM724 430h1v3h-1zM723 547h3v1h-3zM724 546h1v3h-1zM727 430h3v1h-3zM728 429h1v3h-1zM732 394h3v1h-3zM733 393h1v3h-1zM732 565h3v1h-3zM733 564h1v3h-1zM733 571h3v1h-3zM734 570h1v3h-1zM736 571h3v1h-3zM737 570h1v3h-1zM741 305h3v1h-3zM742 304h1v3h-1zM744 383h3v1h-3zM745 382h1v3h-1zM746 388h3v1h-3zM747 387h1v3h-1zM748 384h3v1h-3zM749 383h1v3h-1zM748 508h3v1h-3zM749 507h1v3h-1zM749 505h3v1h-3zM750 504h1v3h-1zM749 512h3v1h-3zM750 511h1v3h-1zM752 526h3v1h-3zM753 525h1v3h-1zM753 510h3v1h-3zM754 509h1v3h-1zM753 528h3v1h-3zM754 527h1v3h-1zM754 392h3v1h-3zM755 391h1v3h-1zM754 508h3v1h-3zM755 507h1v3h-1zM755 362h3v1h-3zM756 361h1v3h-1zM755 573h3v1h-3zM756 572h1v3h-1zM757 473h3v1h-3zM758 472h1v3h-1zM757 547h3v1h-3zM758 546h1v3h-1zM758 549h3v1h-3zM759 548h1v3h-1zM760 391h3v1h-3zM761 390h1v3h-1zM763 545h3v1h-3zM764 544h1v3h-1zM763 550h3v1h-3zM764 549h1v3h-1zM765 548h3v1h-3zM766 547h1v3h-1zM766 380h3v1h-3zM767 379h1v3h-1zM773 434h3v1h-3zM774 433h1v3h-1zM773 437h3v1h-3zM774 436h1v3h-1zM776 252h3v1h-3zM777 251h1v3h-1zM776 434h3v1h-3zM777 433h1v3h-1zM777 255h3v1h-3zM778 254h1v3h-1zM779 251h3v1h-3zM780 250h1v3h-1zM782 425h3v1h-3zM783 424h1v3h-1zM786 332h3v1h-3zM787 331h1v3h-1zM787 335h3v1h-3zM788 334h1v3h-1zM791 408h3v1h-3zM792 407h1v3h-1zM791 560h3v1h-3zM792 559h1v3h-1zM793 279h3v1h-3zM794 278h1v3h-1zM794 269h3v1h-3zM795 268h1v3h-1zM796 272h3v1h-3zM797 271h1v3h-1zM796 531h3v1h-3zM797 530h1v3h-1zM797 322h3v1h-3zM798 321h1v3h-1zM798 274h3v1h-3zM799 273h1v3h-1zM799 318h3v1h-3zM800 317h1v3h-1zM800 272h3v1h-3zM801 271h1v3h-1zM801 279h3v1h-3zM802 278h1v3h-1zM803 246h3v1h-3zM804 245h1v3h-1zM803 277h3v1h-3zM804 276h1v3h-1zM803 315h3v1h-3zM804 314h1v3h-1zM803 506h3v1h-3zM804 505h1v3h-1zM804 222h3v1h-3zM805 221h1v3h-1zM804 273h3v1h-3zM805 272h1v3h-1zM805 219h3v1h-3zM806 218h1v3h-1zM805 250h3v1h-3zM806 249h1v3h-1zM805 271h3v1h-3zM806 270h1v3h-1zM806 216h3v1h-3zM807 215h1v3h-1zM806 276h3v1h-3zM807 275h1v3h-1zM806 342h3v1h-3zM807 341h1v3h-1zM806 505h3v1h-3zM807 504h1v3h-1zM807 223h3v1h-3zM808 222h1v3h-1zM807 246h3v1h-3zM808 245h1v3h-1zM808 220h3v1h-3zM809 219h1v3h-1zM808 248h3v1h-3zM809 247h1v3h-1zM808 250h3v1h-3zM809 249h1v3h-1zM809 217h3v1h-3zM810 216h1v3h-1zM815 279h3v1h-3zM816 278h1v3h-1zM819 239h3v1h-3zM820 238h1v3h-1zM819 270h3v1h-3zM820 269h1v3h-1zM820 275h3v1h-3zM821 274h1v3h-1zM821 272h3v1h-3zM822 271h1v3h-1zM822 398h3v1h-3zM823 397h1v3h-1zM822 558h3v1h-3zM823 557h1v3h-1zM823 561h3v1h-3zM824 560h1v3h-1zM826 298h3v1h-3zM827 297h1v3h-1zM826 563h3v1h-3zM827 562h1v3h-1zM829 297h3v1h-3zM830 296h1v3h-1zM830 333h3v1h-3zM831 332h1v3h-1zM831 491h3v1h-3zM832 490h1v3h-1zM834 490h3v1h-3zM835 489h1v3h-1zM834 534h3v1h-3zM835 533h1v3h-1zM836 536h3v1h-3zM837 535h1v3h-1zM837 490h3v1h-3zM838 489h1v3h-1zM838 534h3v1h-3zM839 533h1v3h-1zM838 538h3v1h-3zM839 537h1v3h-1zM842 534h3v1h-3zM843 533h1v3h-1zM845 574h3v1h-3zM846 573h1v3h-1zM846 394h3v1h-3zM847 393h1v3h-1zM848 392h3v1h-3zM849 391h1v3h-1zM849 220h3v1h-3zM850 219h1v3h-1zM851 218h3v1h-3zM852 217h1v3h-1zM851 464h3v1h-3zM852 463h1v3h-1zM852 396h3v1h-3zM853 395h1v3h-1zM854 394h3v1h-3zM855 393h1v3h-1zM855 305h3v1h-3zM856 304h1v3h-1zM856 308h3v1h-3zM857 307h1v3h-1zM856 566h3v1h-3zM857 565h1v3h-1zM858 304h3v1h-3zM859 303h1v3h-1zM862 353h3v1h-3zM863 352h1v3h-1zM863 472h3v1h-3zM864 471h1v3h-1zM863 497h3v1h-3zM864 496h1v3h-1zM865 350h3v1h-3zM866 349h1v3h-1zM865 353h3v1h-3zM866 352h1v3h-1zM865 356h3v1h-3zM866 355h1v3h-1zM866 575h3v1h-3zM867 574h1v3h-1zM867 467h3v1h-3zM868 466h1v3h-1zM867 470h3v1h-3zM868 469h1v3h-1zM868 315h3v1h-3zM869 314h1v3h-1zM868 373h3v1h-3zM869 372h1v3h-1zM870 316h3v1h-3zM871 315h1v3h-1zM871 376h3v1h-3zM872 375h1v3h-1zM871 390h3v1h-3zM872 389h1v3h-1zM872 594h3v1h-3zM873 593h1v3h-1zM873 385h3v1h-3zM874 384h1v3h-1zM874 592h3v1h-3zM875 591h1v3h-1zM875 389h3v1h-3zM876 388h1v3h-1zM879 388h3v1h-3zM880 387h1v3h-1zM882 415h3v1h-3zM883 414h1v3h-1zM882 420h3v1h-3zM883 419h1v3h-1zM884 413h3v1h-3zM885 412h1v3h-1zM885 394h3v1h-3zM886 393h1v3h-1zM886 358h3v1h-3zM887 357h1v3h-1zM886 401h3v1h-3zM887 400h1v3h-1zM886 419h3v1h-3zM887 418h1v3h-1zM887 397h3v1h-3zM888 396h1v3h-1zM888 418h3v1h-3zM889 417h1v3h-1zM889 354h3v1h-3zM890 353h1v3h-1zM891 412h3v1h-3zM892 411h1v3h-1zM891 415h3v1h-3zM892 414h1v3h-1zM894 415h3v1h-3zM895 414h1v3h-1zM894 418h3v1h-3zM895 417h1v3h-1zM895 286h3v1h-3zM896 285h1v3h-1zM908 427h3v1h-3zM909 426h1v3h-1zM909 430h3v1h-3zM910 429h1v3h-1zM915 595h3v1h-3zM916 594h1v3h-1zM916 558h3v1h-3zM917 557h1v3h-1zM917 323h3v1h-3zM918 322h1v3h-1zM918 593h3v1h-3zM919 592h1v3h-1zM918 599h3v1h-3zM919 598h1v3h-1zM919 534h3v1h-3zM920 533h1v3h-1zM919 552h3v1h-3zM920 551h1v3h-1zM919 555h3v1h-3zM920 554h1v3h-1zM919 558h3v1h-3zM920 557h1v3h-1zM921 596h3v1h-3zM922 595h1v3h-1zM922 323h3v1h-3zM923 322h1v3h-1zM922 327h3v1h-3zM923 326h1v3h-1zM922 547h3v1h-3zM923 546h1v3h-1zM922 552h3v1h-3zM923 551h1v3h-1zM922 558h3v1h-3zM923 557h1v3h-1zM925 546h3v1h-3zM926 545h1v3h-1zM936 600h3v1h-3zM937 599h1v3h-1zM939 596h3v1h-3zM940 595h1v3h-1zM939 599h3v1h-3zM940 598h1v3h-1z" fill="#ffe8c8"/><path d="M622 331h1v1h-1zM627 331h1v1h-1zM629 331h1v1h-1zM634 334h1v1h-1zM635 334h1v1h-1zM636 331h1v1h-1zM656 270h1v1h-1zM658 273h1v1h-1zM658 276h1v1h-1zM660 271h1v1h-1zM667 271h1v1h-1zM713 199h1v1h-1zM714 204h1v1h-1zM715 204h1v1h-1zM717 199h1v1h-1zM719 200h1v1h-1zM719 203h1v1h-1zM721 197h1v1h-1zM728 209h1v1h-1zM729 205h1v1h-1zM732 202h1v1h-1zM732 206h1v1h-1zM734 206h1v1h-1zM734 212h1v1h-1zM736 214h1v1h-1zM737 204h1v1h-1zM737 208h1v1h-1zM737 212h1v1h-1zM739 203h1v1h-1zM742 198h1v1h-1zM743 201h1v1h-1zM745 208h1v1h-1zM745 213h1v1h-1zM747 201h1v1h-1zM748 198h1v1h-1zM769 201h1v1h-1zM769 208h1v1h-1zM770 201h1v1h-1zM770 206h1v1h-1zM773 164h1v1h-1zM773 205h1v1h-1zM774 162h1v1h-1zM774 167h1v1h-1zM774 172h1v1h-1zM774 204h1v1h-1zM775 205h1v1h-1zM777 204h1v1h-1zM779 173h1v1h-1zM779 196h1v1h-1zM780 173h1v1h-1zM780 189h1v1h-1zM782 178h1v1h-1zM783 187h1v1h-1zM783 194h1v1h-1zM784 176h1v1h-1zM784 178h1v1h-1zM785 176h1v1h-1zM785 183h1v1h-1zM787 189h1v1h-1zM788 195h1v1h-1zM790 176h1v1h-1zM794 173h1v1h-1zM809 194h1v1h-1zM811 186h1v1h-1zM812 182h1v1h-1zM812 192h1v1h-1zM813 184h1v1h-1zM815 184h1v1h-1zM816 183h1v1h-1zM817 189h1v1h-1zM820 198h1v1h-1zM820 202h1v1h-1zM822 198h1v1h-1zM824 199h1v1h-1zM826 200h1v1h-1zM827 197h1v1h-1zM828 607h1v1h-1zM830 191h1v1h-1zM849 178h1v1h-1zM852 174h1v1h-1zM858 176h1v1h-1zM904 196h1v1h-1zM907 192h1v1h-1zM907 194h1v1h-1zM908 192h1v1h-1zM908 193h1v1h-1zM910 193h1v1h-1zM914 220h1v1h-1zM916 210h1v1h-1zM918 208h1v1h-1zM926 221h1v1h-1zM927 215h1v1h-1zM931 207h1v1h-1zM931 208h1v1h-1zM932 213h1v1h-1zM933 204h1v1h-1zM934 203h1v1h-1zM934 217h1v1h-1zM936 207h1v1h-1zM937 207h1v1h-1zM937 217h1v1h-1zM938 209h1v1h-1zM940 217h1v1h-1zM941 221h1v1h-1zM953 308h1v1h-1zM954 253h1v1h-1zM956 295h1v1h-1zM957 295h1v1h-1zM959 257h1v1h-1zM960 271h1v1h-1zM961 247h1v1h-1zM961 273h1v1h-1zM961 302h1v1h-1zM962 249h1v1h-1zM963 239h1v1h-1zM963 245h1v1h-1zM963 248h1v1h-1zM963 270h1v1h-1zM963 295h1v1h-1zM964 252h1v1h-1zM964 259h1v1h-1zM964 300h1v1h-1zM965 301h1v1h-1zM966 307h1v1h-1zM970 273h1v1h-1zM972 249h1v1h-1zM973 249h1v1h-1zM978 267h1v1h-1zM978 272h1v1h-1zM980 279h1v1h-1zM984 277h1v1h-1zM984 278h1v1h-1zM985 277h1v1h-1zM988 276h1v1h-1zM990 281h1v1h-1zM998 327h1v1h-1zM1000 320h1v1h-1zM1001 306h1v1h-1zM1001 307h1v1h-1zM1001 313h1v1h-1zM1001 327h1v1h-1zM1003 309h1v1h-1zM1003 319h1v1h-1zM1003 324h1v1h-1zM1003 329h1v1h-1zM1004 308h1v1h-1zM1005 311h1v1h-1zM1005 315h1v1h-1zM1005 324h1v1h-1zM1007 308h1v1h-1zM1010 308h1v1h-1z" fill="#e8e8e8"/>
 </g>
</svg>
<!-- vp header -->
<div class="a" style="left:535px;top:58px;width:577px;height:25.5px;background:rgba(48,48,48,.93);border-radius:4.5px 4.5px 0 0"></div>
<div class="a" style="left:535px;top:83.5px;width:146.5px;height:25.5px;background:rgba(48,48,48,.93);border-radius:0 0 6px 0"></div>
<div class="a" style="left:927px;top:84.5px;width:185px;height:25px;background:rgba(48,48,48,.93);border-radius:0 0 0 6px"></div>
<div class="btn dk" style="left:544px;top:61px;width:30px;height:18.5px"></div>
<svg style="left:544px;top:61px" width="31" height="19" viewBox="0 0 31 19">
 <g stroke="#d8d8d8" stroke-width="1.1" fill="none">
  <path d="M4 11.5 H16 M3.5 15.5 H17 M7 8 L5.5 18 M13 8 L11.5 18"/>
  <path d="M20 8.5 L22.5 11 L25 8.5"/>
 </g>
 <circle cx="14" cy="6.5" r="4" fill="#e6e6e6" stroke="#282828" stroke-width="1"/>
 <circle cx="13" cy="5.5" r="1.2" fill="#fff"/>
</svg>
<div class="btn dk" style="left:581px;top:61px;width:96px;height:18.5px"></div>
<svg style="left:581px;top:61px" width="96" height="19" viewBox="0 0 96 19">
 <g stroke="#d8d8d8" stroke-width="1" fill="none">
  <path d="M6.5 4.5 H11 M6.5 15.5 H13.5 M5.5 5.5 V14.5 M15 8 V14.5"/>
  <rect x="3.5" y="2.5" width="3" height="3"/><rect x="3.5" y="14.5" width="3" height="3"/><rect x="13.5" y="14.5" width="3" height="3"/>
  <path d="M86.5 8 L89.5 11 L92.5 8"/>
 </g>
 <rect x="12.5" y="1.5" width="4.5" height="4.5" fill="#e8e8e8"/>
</svg>
<div class="mt" style="left:606.5px;top:63.5px;color:#e0e0e0">Edit Mode</div>
<div class="btn bl" style="left:684px;top:61px;width:18.5px;height:18.5px;border-radius:4px 0 0 4px"></div>
<div class="btn" style="left:702.5px;top:61px;width:19.5px;height:18.5px;border-radius:0;background:#484848"></div>
<div class="btn" style="left:722px;top:61px;width:20px;height:18.5px;border-radius:0 4px 4px 0;background:#484848"></div>
<svg style="left:684px;top:61px" width="60" height="19" viewBox="0 0 60 19">
 <path d="M5 3.5 H15 L17 5.5 V15.5 H5" stroke="#f0f0f0" stroke-width="1" fill="none"/>
 <rect x="2.5" y="7.5" width="4" height="4" fill="#f0f0f0"/>
 <path d="M24.5 15.5 V6 Q24.5 3.5 27 3.5 H34.5 L36.5 5.5 V15.5" stroke="#cfcfcf" stroke-width="1" fill="none"/>
 <rect x="29.5" y="7" width="3" height="8.5" fill="#e6e6e6"/>
 <path d="M45 5 L47 3.5 H56 V12.5 L54 14.5" stroke="#cfcfcf" stroke-width="1" fill="none"/>
 <rect x="44" y="6.5" width="10" height="9" fill="#e6e6e6"/>
</svg>
<div class="mt" style="left:754.8px;top:64.3px">View</div>
<div class="mt" style="left:796px;top:64.3px">Select</div>
<div class="mt" style="left:843.2px;top:64.3px">Add</div>
<div class="mt" style="left:880.1px;top:64.3px">Mesh</div>
<div class="mt" style="left:924px;top:64.3px">Vertex</div>
<div class="mt" style="left:973.1px;top:64.3px">Edge</div>
<div class="mt" style="left:1014.9px;top:64.3px">Face</div>
<div class="mt" style="left:1055.3px;top:64.3px">UV</div>
<div class="btn dk" style="left:1080px;top:61.5px;width:29.5px;height:18.5px"></div>
<svg style="left:1080px;top:61.5px" width="32" height="19" viewBox="0 0 32 19">
 <rect x="3.5" y="3.5" width="12" height="12" stroke="#6a6a6a" stroke-width="1" fill="none"/>
 <path d="M8 15.5 Q8 8 15.5 8" stroke="#9a9a9a" stroke-width="1.4" fill="none"/>
 <path d="M20 8.5 L22.5 11 L25 8.5" stroke="#d8d8d8" stroke-width="1" fill="none"/>
</svg>
<!-- tool header left -->
<svg style="left:548px;top:86px" width="21" height="21" viewBox="0 0 21 21">
 <rect x="1.5" y="1.5" width="18" height="18" rx="1.5" stroke="#c99a45" stroke-width="1.6" fill="none" stroke-dasharray="3.2 2"/>
 <path d="M8 5.5 L8 15 L10.5 12.5 L15 12 Z" fill="#d8d8d8"/>
</svg>
<div class="btn bl" style="left:579px;top:87px;width:18px;height:18px;border-radius:4px 0 0 4px"></div>
<div class="btn" style="left:597px;top:87px;width:19px;height:18px;border-radius:0;background:#484848"></div>
<div class="btn" style="left:616.2px;top:87px;width:18.7px;height:18px;border-radius:0;background:#484848"></div>
<div class="btn" style="left:635px;top:87px;width:18.6px;height:18px;border-radius:0;background:#484848"></div>
<div class="btn" style="left:653.6px;top:87px;width:19.3px;height:18px;border-radius:0 4px 4px 0;background:#484848"></div>
<svg style="left:579px;top:87px" width="95" height="18" viewBox="0 0 95 18">
 <rect x="2.5" y="2.5" width="13" height="13" stroke="#f4f4f4" stroke-width="1.3" fill="none" stroke-dasharray="2.2 1.6"/>
 <path d="M21 8 H27 V2.5 H34 V10 H28 V15.5 H21Z" fill="#cfcfcf"/>
 <path d="M40.5 8 V15.5 H47.5" stroke="#cfcfcf" stroke-width="1.2" fill="none" stroke-dasharray="2 1.5"/>
 <path d="M45 2.5 H52.5 V10 H47 V8 H45Z" fill="#cfcfcf"/>
 <path d="M59 2.5 H71 V15 H59Z M62.5 6 V11.5 H67.5 V6Z" fill="#cfcfcf" fill-rule="evenodd"/>
 <rect x="78" y="2.5" width="12.5" height="12.5" stroke="#cfcfcf" stroke-width="1.2" fill="none" stroke-dasharray="2 1.6"/>
 <rect x="81.5" y="6" width="5.5" height="5.5" fill="#cfcfcf"/>
</svg>
<div class="a" style="left:596.5px;top:87px;width:1px;height:18px;background:#3a3a3a"></div><div class="a" style="left:615.7px;top:87px;width:1px;height:18px;background:#3a3a3a"></div><div class="a" style="left:634.5px;top:87px;width:1px;height:18px;background:#3a3a3a"></div><div class="a" style="left:653.1px;top:87px;width:1px;height:18px;background:#3a3a3a"></div><div class="a" style="left:702px;top:61px;width:1px;height:18.5px;background:#3a3a3a"></div><div class="a" style="left:721.5px;top:61px;width:1px;height:18.5px;background:#3a3a3a"></div>
<!-- tool header right -->
<svg style="left:935px;top:87px" width="18" height="18" viewBox="0 0 18 18">
 <path d="M8.5 1 V17" stroke="#d8d8d8" stroke-width="1" stroke-dasharray="1.6 1.2"/>
 <path d="M7 3.5 Q3.5 1.5 2.2 3.2 Q1.2 5.5 4.2 8.5 Q1.2 11.5 2.2 13.8 Q3.5 15.5 7 13.5" stroke="#d0d0d0" stroke-width="1.1" fill="none"/>
 <path d="M10 3.5 Q13.5 1.5 14.8 3.2 Q15.8 5.5 12.8 8.5 Q15.8 11.5 14.8 13.8 Q13.5 15.5 10 13.5" stroke="#d0d0d0" stroke-width="1.1" fill="none"/>
</svg>
<div class="btn" style="left:955.5px;top:87px;width:17px;height:18px;border-radius:4px 0 0 4px;background:#484848"></div>
<div class="btn" style="left:972.5px;top:87px;width:17px;height:18px;border-radius:0;background:#484848;border-left:1px solid #3a3a3a;border-right:1px solid #3a3a3a"></div>
<div class="btn" style="left:989.5px;top:87px;width:17.5px;height:18px;border-radius:0 4px 4px 0;background:#484848"></div>
<div class="mt" style="left:960.5px;top:91px;color:#e0e0e0">X</div>
<div class="mt" style="left:977.5px;top:91px;color:#e0e0e0">Y</div>
<div class="mt" style="left:994.5px;top:91px;color:#e0e0e0">Z</div>
<div class="btn" style="left:1013.5px;top:87px;width:18.5px;height:18px;background:#484848"></div>
<svg style="left:1013.5px;top:87px" width="19" height="18" viewBox="0 0 19 18">
 <rect x="12" y="2.5" width="3.5" height="3.5" stroke="#e0e0e0" stroke-width="1" fill="none"/>
 <rect x="3.5" y="12" width="3.5" height="3.5" stroke="#e0e0e0" stroke-width="1" fill="none"/>
 <path d="M6 10.5 Q6 6 11 5" stroke="#e0e0e0" stroke-width="1" fill="none" stroke-dasharray="2 1.4"/>
 <path d="M13 7.5 Q13 12 8 13" stroke="#e0e0e0" stroke-width="1" fill="none" stroke-dasharray="2 1.4"/>
</svg>
<div class="btn dk" style="left:1039px;top:87px;width:65px;height:18px"></div>
<div class="mt" style="left:1045.8px;top:90.5px;color:#e0e0e0">Options</div>
<svg style="left:1095.5px;top:95px" width="8" height="5"><path d="M0.5 0.5 L3.5 3.5 L6.5 0.5" stroke="#d8d8d8" stroke-width="1" fill="none"/></svg>
<!-- info text -->
<div style="position:absolute;left:0;top:0;color:#f4f4f4;text-shadow:0 0 2px rgba(0,0,0,.6);-webkit-text-stroke:.25px">
<div class="t" style="left:544.5px;top:118.8px;font-size:11.5px;transform:scaleY(.9);transform-origin:0 9.73px">User Perspective</div>
<div class="t" style="left:544.5px;top:136.8px;font-size:11.5px;transform:scaleY(.9);transform-origin:0 9.73px">(0) interior</div>
<div class="t" style="left:544.5px;top:164.5px;font-size:11.5px;transform:scaleY(.9);transform-origin:0 9.73px">Objects</div>
<div class="t" style="left:544.5px;top:181.2px;font-size:11.5px;transform:scaleY(.9);transform-origin:0 9.73px">Vertices</div>
<div class="t" style="left:544.5px;top:198.4px;font-size:11.5px;transform:scaleY(.9);transform-origin:0 9.73px">Edges</div>
<div class="t" style="left:544.5px;top:215.1px;font-size:11.5px;transform:scaleY(.9);transform-origin:0 9.73px">Faces</div>
<div class="t" style="left:544.5px;top:232.3px;font-size:11.5px;transform:scaleY(.9);transform-origin:0 9.73px">Triangles</div>
<div class="t" style="left:603.4px;top:164.5px;font-size:12.2px;transform:scaleY(.87);transform-origin:0 10.33px">3 / 3</div>
<div class="t" style="left:603.4px;top:181.2px;font-size:12.2px;transform:scaleY(.87);transform-origin:0 10.33px">29,269 / 106,612</div>
<div class="t" style="left:603.4px;top:198.4px;font-size:12.2px;transform:scaleY(.87);transform-origin:0 10.33px">57,354 / 207,124</div>
<div class="t" style="left:603.4px;top:215.1px;font-size:12.2px;transform:scaleY(.87);transform-origin:0 10.33px">28,106 / 100,872</div>
<div class="t" style="left:603.4px;top:232.3px;font-size:12.2px;transform:scaleY(.87);transform-origin:0 10.33px">201,296</div>
</div>
<!-- gizmo -->
<svg style="left:0;top:0" width="1410" height="1017">
 <circle cx="1029.8" cy="158.4" r="7.5" fill="#8a4048" stroke="#d04858" stroke-width="1.3"/>
 <circle cx="1061.8" cy="190.4" r="7.5" fill="#3a5a85" stroke="#4a7ac0" stroke-width="1.3"/>
 <path d="M1061.8 154 V127" stroke="#4a7fd0" stroke-width="2"/>
 <path d="M1061.8 158.4 H1094" stroke="#e04858" stroke-width="2"/>
 <circle cx="1061.8" cy="163" r="7.5" fill="#6a9a30"/>
 <circle cx="1061.8" cy="127" r="8" fill="#4a82d8"/>
 <text x="1061.8" y="131.3" font-size="11" text-anchor="middle" fill="#10203a" font-family="Liberation Sans" font-weight="bold">Z</text>
 <circle cx="1094" cy="158.4" r="8" fill="#e0485a"/>
 <text x="1094" y="162.6" font-size="11" text-anchor="middle" fill="#3a0a10" font-family="Liberation Sans" font-weight="bold">X</text>
 <circle cx="1061.8" cy="154" r="7.6" fill="#5a6a40" stroke="#b4e040" stroke-width="1.6"/>
 <g fill="#2a2a2a" opacity=".75">
  <circle cx="1089.7" cy="213.5" r="13.4"/><circle cx="1089.7" cy="243.8" r="13.4"/>
  <circle cx="1089.7" cy="274" r="13.4"/><circle cx="1089.7" cy="303.2" r="13.4"/>
 </g>
 <g stroke="#e6e6e6" fill="none" stroke-width="1.6">
  <circle cx="1091.5" cy="212.5" r="5.8" fill="#e6e6e6" stroke="none"/><path d="M1087.3 216.8 L1082.8 221.3" stroke-width="2.2" stroke-linecap="round"/>
 </g>
 <path d="M1091.5 209 V216 M1088 212.5 H1095" stroke="#2a2a2a" stroke-width="1.2"/>
 <g stroke="#e6e6e6" stroke-width="2.1" stroke-linecap="round" fill="none"><path d="M1087.3 241.3 L1087.3 245.8 M1089.9 239.0 L1089.9 245.3 M1092.5 239.6 L1092.5 245.3 M1094.9 241.6 L1094.9 246.3 M1084.0 245.6 L1086.9 248.4"/></g><path d="M1086.3 244.8 L1096.0 244.8 L1095.9 247.8 Q1095.5 251.1 1091.2 251.2 Q1087.5 251.2 1086.3 248.3 Z" fill="#e6e6e6"/>
 <g stroke="#e6e6e6" stroke-width="1.2" fill="none">
  <path d="M1084.5 266.5 Q1082 266.5 1082 269 Q1082 271.5 1084.5 271.5 H1095 Q1097.5 271.5 1097.5 268.5 Q1097.5 265 1094.5 265 Q1092.5 265 1091.5 266.5Z"/>
  <circle cx="1093.8" cy="268.3" r="1.3"/>
  <path d="M1084 268.7 H1087 M1085.5 267.2 V270.2"/>
  <rect x="1085.5" y="275" width="6.5" height="5"/><path d="M1083 276 V279 M1093.5 277.5 L1096.5 275.5 V279.5Z"/>
 </g>
 <g stroke="#e6e6e6" stroke-width="1.2" fill="none">
  <path d="M1085 297 H1094.5 L1097 309 H1082.5 Z M1083.8 301 H1095.5 M1083.2 305 H1096 M1088 297 L1087.3 309 M1091.5 297 L1092.3 309"/>
 </g>
 <path d="M1110 126 L1106.5 130 L1110 134" stroke="#a0a0a0" stroke-width="1" fill="none"/>
 <rect x="535.5" y="122" width="7" height="16" rx="3" fill="#383838"/><path d="M537.5 126.5 L540.5 130.2 L537.5 134" stroke="#a0a0a0" stroke-width="1" fill="none"/>
 <!-- 3d cursor -->
 <path d="M943 350.7 H982 M962.5 331 V372" stroke="#1a1a1a" stroke-width="1"/>
 <circle cx="962.5" cy="350.7" r="9.5" stroke="#fff" stroke-width="1.6" fill="none"/>
 <circle cx="962.5" cy="350.7" r="9.5" stroke="#d02020" stroke-width="1.6" fill="none" stroke-dasharray="3.7 3.7"/>
 <circle cx="822.8" cy="390.7" r="3" stroke="#111" stroke-width="1" fill="none"/>
</svg>
<!-- Shader editor content -->
<div class="btn" style="left:542.5px;top:689.3px;width:31px;height:19.5px;background:#262626;box-shadow:inset 0 0 0 1px #363636"></div>
<svg style="left:542.5px;top:689.3px" width="31" height="20" viewBox="0 0 31 20">
 <circle cx="11.5" cy="10" r="6.8" stroke="#e0e0e0" stroke-width="1.1" fill="none"/>
 <path d="M8 8 Q8.8 6 10.8 5.2" stroke="#e0e0e0" stroke-width="1.3" fill="none"/>
 <path d="M20.5 8.5 L23 11 L25.5 8.5" stroke="#d8d8d8" stroke-width="1" fill="none"/>
</svg>
<div class="btn" style="left:579.3px;top:689.3px;width:90.4px;height:19.5px;background:#262626;box-shadow:inset 0 0 0 1px #363636"></div>
<svg style="left:579.3px;top:689.3px" width="91" height="20" viewBox="0 0 91 20">
 <path d="M5.5 6 V3.5 H8 M12 3.5 H14.5 V6 M14.5 14 V16.5 H12 M8 16.5 H5.5 V14" stroke="#d8d8d8" stroke-width="1" fill="none"/>
 <rect x="7" y="5.5" width="6" height="9" fill="#e6e6e6"/><rect x="6.5" y="6" width="7" height="8" fill="#e6e6e6"/>
 <path d="M77.5 8.5 L80.5 11.5 L83.5 8.5" stroke="#d8d8d8" stroke-width="1" fill="none"/>
</svg>
<div class="mt" style="left:605.2px;top:693.4px;color:#e0e0e0">Object</div>
<div class="mt" style="left:682.2px;top:693.4px">View</div>
<div class="mt" style="left:723.3px;top:693.4px">Select</div>
<div class="mt" style="left:770.1px;top:693.4px">Add</div>
<div class="mt" style="left:807.3px;top:693.4px">Node</div>
<div class="btn" style="left:859.7px;top:689.3px;width:78.3px;height:19.5px;background:#262626;box-shadow:inset 0 0 0 1px #363636"></div>
<div class="mt" style="left:866.8px;top:693.4px;color:#e0e0e0">Slot</div>
<svg style="left:929px;top:697.5px" width="8" height="5"><path d="M0.5 0.5 L3.5 3.5 L6.5 0.5" stroke="#d8d8d8" stroke-width="1" fill="none"/></svg>
<div class="btn" style="left:944.2px;top:689.3px;width:40px;height:19.5px;background:#262626;box-shadow:inset 0 0 0 1px #363636"></div>
<div class="btn" style="left:975.6px;top:689.3px;width:119.3px;height:19.5px;border-radius:0 4px 4px 0;background:#545454"></div>
<svg style="left:944.2px;top:689.3px" width="60" height="20" viewBox="0 0 60 20">
 <circle cx="10.5" cy="10" r="6.5" fill="#e8e8e8"/>
 <path d="M10.5 3.5 A6.5 6.5 0 0 0 4 10 H10.5Z M10.5 16.5 A6.5 6.5 0 0 0 17 10 H10.5Z" fill="#262626"/>
 <path d="M19.5 8.5 L22 11 L24.5 8.5" stroke="#d8d8d8" stroke-width="1" fill="none"/>
 <path d="M38 10 H48 M43 5 V15" stroke="#e8e8e8" stroke-width="1.1"/>
</svg>
<div class="mt" style="left:1032.9px;top:693.4px;color:#e6e6e6">New</div>
<svg style="left:1102px;top:692px" width="10" height="14"><path d="M9 1 L3 7 M1.5 5 L7 10.5 M3 9 L0 12.5" stroke="#a0a0a0" stroke-width="1" fill="none"/></svg>
<!-- tools -->
<div class="btn bl" style="left:542.9px;top:719.7px;width:37.4px;height:33.4px;border-radius:5px"></div>
<svg style="left:542.9px;top:719.7px" width="38" height="34" viewBox="0 0 38 34">
 <rect x="8" y="5.5" width="22" height="22" stroke="#e8b860" stroke-width="1.5" fill="none" stroke-dasharray="3.4 2.2"/>
 <path d="M16.5 11 V22 L19.5 19 L24 18.5Z" fill="#e6e6e6"/>
 <path d="M35 29 L35 32 L32 32Z" fill="#c8d8f0"/>
</svg>
<div class="btn" style="left:542.9px;top:758.9px;width:37.4px;height:34.7px;border-radius:5px;background:#282828;box-shadow:inset 0 0 0 1px #353535"></div>
<svg style="left:542.9px;top:758.9px" width="38" height="35" viewBox="0 0 38 35">
 <path d="M9 20 L22 8 Q23.5 6.5 25 8 Q26.5 9.5 25 11 L12 23 L8.5 24Z" fill="#e6e6e6"/>
 <path d="M7.5 22 Q12 28 17 24 Q22 19.5 27 22.5 Q28 23 28.5 23.5" stroke="#6cc090" stroke-width="1.1" fill="none"/>
 <path d="M35 29.5 L35 32.5 L32 32.5Z" fill="#b0b0b0"/>
</svg>
<div class="btn" style="left:542.9px;top:799.3px;width:37.4px;height:34.3px;border-radius:5px;background:#282828;box-shadow:inset 0 0 0 1px #353535"></div>
<svg style="left:542.9px;top:799.3px" width="38" height="35" viewBox="0 0 38 35">
 <path d="M6.5 19 H31.5" stroke="#c08078" stroke-width="1.3"/>
 <circle cx="15.5" cy="10" r="2.2" stroke="#f0f0f0" stroke-width="1.2" fill="none"/>
 <circle cx="21.5" cy="10" r="2.2" stroke="#f0f0f0" stroke-width="1.2" fill="none"/>
 <path d="M16.5 12 L22.5 24.5 M20.5 12 L13 24.5" stroke="#f0f0f0" stroke-width="1.3"/>
</svg>
<!-- scrollbars -->
<div class="a" style="left:543px;top:1002.5px;width:217px;height:3px;border-radius:2px;background:#3a3a3a"></div>
<div class="a" style="left:1106.5px;top:739px;width:3px;height:79px;border-radius:2px;background:#363636"></div>
<svg style="left:1104px;top:728px" width="8" height="9"><path d="M6.5 0.5 L2.5 4.5 L6.5 8.5" stroke="#a8a8a8" stroke-width="1" fill="none"/></svg>
<!-- Outliner -->
<svg style="left:0;top:0" width="1410" height="1017">
 <defs><clipPath id="olc"><rect x="1115" y="58" width="293" height="474" rx="4.5"/></clipPath></defs>
 <g clip-path="url(#olc)">
  <rect x="1115" y="124" width="293" height="20" fill="#2a2a2a"/>
  <rect x="1115" y="164" width="293" height="20" fill="#2a2a2a"/>
  <rect x="1115" y="204" width="293" height="20" fill="#2a2a2a"/>
  <rect x="1115" y="244" width="293" height="20" fill="#2a2a2a"/>
  <rect x="1115" y="284" width="293" height="20" fill="#2a2a2a"/>
  <rect x="1115" y="324" width="293" height="20" fill="#2a2a2a"/>
  <rect x="1115" y="364" width="293" height="20" fill="#2a2a2a"/>
  <rect x="1115" y="404" width="293" height="20" fill="#2a2a2a"/>
  <rect x="1115" y="444" width="293" height="20" fill="#2a2a2a"/>
  <rect x="1115" y="484" width="293" height="20" fill="#2a2a2a"/>
  <rect x="1115" y="524" width="293" height="20" fill="#2a2a2a"/>
  <rect x="1115" y="104.4" width="293" height="19.8" fill="#203a5e"/>
 </g>
 <!-- header buttons -->
 <rect x="1123.8" y="61" width="31" height="18.5" rx="4" fill="#282828" stroke="#333" stroke-width="1"/>
 <g fill="#dedede">
  <rect x="1127.5" y="63.5" width="5" height="3"/><rect x="1133" y="68" width="7.5" height="3"/><rect x="1133" y="73" width="7.5" height="3"/>
 </g>
 <path d="M1129 66.5 V74.5 H1133 M1129 69.5 H1133" stroke="#dedede" stroke-width="1" fill="none"/>
 <path d="M1144.5 68.5 L1147 71 L1149.5 68.5" stroke="#d8d8d8" stroke-width="1" fill="none"/>
 <rect x="1160.6" y="61" width="31" height="18.5" rx="4" fill="#282828" stroke="#333" stroke-width="1"/>
 <g stroke="#dedede" stroke-width="1" fill="none">
  <path d="M1164 67 V76 H1173 M1166 65 V74 H1175"/>
  <rect x="1168" y="63" width="9" height="9"/>
  <path d="M1181 68.5 L1183.5 71 L1186 68.5"/>
 </g>
 <path d="M1168 72 L1171.5 66.5 L1174.5 72Z" fill="#dedede"/><circle cx="1174.5" cy="65.5" r="1" fill="#dedede"/>
 <rect x="1208.3" y="61" width="118.3" height="18.5" rx="4" fill="#1d1d1d" stroke="#303030" stroke-width="1"/>
 <circle cx="1221.5" cy="68.5" r="4.2" stroke="#d8d8d8" stroke-width="1.2" fill="none"/>
 <path d="M1218.5 71.5 L1213.5 76.5" stroke="#d8d8d8" stroke-width="1.3"/>
 <rect x="1349.4" y="61" width="31.2" height="18.5" rx="4" fill="#282828" stroke="#333" stroke-width="1"/>
 <path d="M1353.5 64 H1366 L1361.5 70 V77 L1359 74.5 V70Z" stroke="#dedede" stroke-width="1.1" fill="none" stroke-linejoin="round"/>
 <path d="M1372 68.5 L1374.5 71 L1377 68.5" stroke="#d8d8d8" stroke-width="1" fill="none"/>
 <rect x="1386.6" y="61" width="18.7" height="18.5" rx="4" fill="#4a4a4a"/>
 <g stroke="#d8d8d8" stroke-width="1" fill="none"><rect x="1389.5" y="66.5" width="10" height="10"/><path d="M1389.5 69.5 H1399.5"/></g>
 <rect x="1392.5" y="72" width="4" height="1.2" fill="#d8d8d8"/>
 <circle cx="1399.5" cy="65.5" r="3.3" fill="#4a4a4a" stroke="#e8e8e8" stroke-width="1"/>
 <path d="M1399.5 63.5 V67.5 M1397.5 65.5 H1401.5" stroke="#e8e8e8" stroke-width="1"/>
 <!-- scene collection row -->
 <rect x="1135.5" y="85.4" width="19.2" height="16.8" rx="4" fill="#4a4a4a"/>
 <rect x="1139" y="88" width="12" height="3.5" fill="#e0e0e0"/>
 <rect x="1139.8" y="92.5" width="10.5" height="7" fill="#e0e0e0"/>
 <rect x="1143" y="94" width="4" height="1.2" fill="#4a4a4a"/>
 <!-- shirt row -->
 <g stroke="#d8d8d8" stroke-width="1" fill="none">
  <path d="M1121 108.5 H1126 M1121 119.5 H1128.5 M1119.8 109.5 V118.5 M1129.5 112 V118.5"/>
  <rect x="1118.3" y="107" width="3" height="3"/><rect x="1118.3" y="118.3" width="3" height="3"/><rect x="1128.2" y="118.3" width="3" height="3"/>
 </g>
 <rect x="1127.3" y="106.3" width="4.2" height="4.2" fill="#e8e8e8"/>
 <path d="M1144 110.5 L1147.5 114.2 L1144 118" stroke="#b8b8b8" stroke-width="1.1" fill="none"/>
 <path d="M1158 108 H1171.5 L1164.8 121Z M1162.3 111 L1164.8 116 L1167.3 111Z" fill="#d98a4a" fill-rule="evenodd"/>
 <rect x="1223.8" y="105.5" width="18.1" height="17.5" rx="4" fill="#1c4a52" stroke="#2a6a70" stroke-width="1"/>
 <g stroke="#30c8b8" stroke-width="1" fill="none">
  <path d="M1229 109.5 H1236.5 L1232.8 117.5Z"/>
  <rect x="1226.8" y="108" width="2.6" height="2.6" fill="#1c4a52"/><rect x="1236.3" y="108" width="2.6" height="2.6" fill="#1c4a52"/><rect x="1231.5" y="117" width="2.6" height="2.6" fill="#1c4a52"/>
 </g>
 <rect x="1243.6" y="105.5" width="19.2" height="17.5" rx="4" fill="#4e5562" stroke="#5c6370" stroke-width="1"/>
 <path d="M1245.5 108 H1259 L1252.3 121Z M1249.8 111 L1252.3 116 L1254.8 111Z" fill="#d98a4a" fill-rule="evenodd"/>
 <text x="1258.5" y="123" font-size="9.5" fill="#e8e8e8" font-family="Liberation Sans">2</text>
 <path d="M1368.5 114.5 Q1375 107 1381.5 114.5 Q1375 122 1368.5 114.5Z" fill="#e8e8e8"/>
 <circle cx="1375" cy="114.5" r="2.6" fill="#203a5e"/><circle cx="1375" cy="114.5" r="1.3" fill="#e8e8e8"/>
 <path d="M1388 110 H1391 L1392.5 108 H1397 L1398.5 110 H1401.5 V120.5 H1388Z" fill="#e8e8e8"/>
 <circle cx="1394.8" cy="115" r="3.2" fill="#203a5e"/><circle cx="1394.8" cy="115" r="2" fill="#e8e8e8"/>
</svg>
<div class="mt" style="left:1234.5px;top:65px;color:#6c6c6c">Search</div>
<div class="mt" style="left:1159.4px;top:89.2px;color:#e6e6e6">Scene Collection</div>
<div class="mt" style="left:1179.6px;top:108.2px;color:#e8903e">shirt</div>
<!-- Properties -->
<svg style="left:0;top:0" width="1410" height="1017">
 <defs><clipPath id="prc"><rect x="1115" y="535" width="293" height="473" rx="4.5"/></clipPath></defs>
 <g clip-path="url(#prc)">
  <rect x="1115" y="560" width="28" height="448" fill="#1f1f1f"/>
  <rect x="1115" y="560" width="28" height="36" fill="#1d1d1d"/>
  <rect x="1116" y="596" width="27" height="1" fill="#262626"/>
 </g>
 <rect x="1116.5" y="689" width="26.5" height="20.5" rx="4" fill="#2e2e2e"/>
 <rect x="1135" y="689" width="8" height="20.5" fill="#2e2e2e"/>
 <rect x="1119" y="949" width="24" height="1" fill="#2a2a2a"/>
 <!-- header -->
 <rect x="1122.3" y="538.4" width="31.4" height="18.9" rx="4" fill="#282828" stroke="#333" stroke-width="1"/>
 <rect x="1126" y="541.2" width="11" height="5.5" rx="2.75" fill="#e0e0e0"/>
 <rect x="1126" y="548.5" width="11" height="5.5" rx="2.75" fill="#e0e0e0"/>
 <rect x="1132" y="542.5" width="3.5" height="3" rx="1.2" fill="#282828"/>
 <rect x="1132" y="549.8" width="3.5" height="3" rx="1.2" fill="#282828"/>
 <path d="M1142.5 546 L1145 548.5 L1147.5 546" stroke="#d8d8d8" stroke-width="1" fill="none"/>
 <rect x="1203.9" y="538.4" width="117.3" height="18.9" rx="4" fill="#1d1d1d" stroke="#303030" stroke-width="1"/>
 <circle cx="1217.5" cy="546" r="4.2" stroke="#d8d8d8" stroke-width="1.2" fill="none"/>
 <path d="M1214.5 549 L1209.5 554" stroke="#d8d8d8" stroke-width="1.3"/>
 <rect x="1386.6" y="538.4" width="18.4" height="18.9" rx="4" fill="#282828" stroke="#333" stroke-width="1"/>
 <path d="M1392.5 546 L1395.8 549.3 L1399 546" stroke="#d8d8d8" stroke-width="1.1" fill="none"/>
 <!-- tab icons -->
 <g fill="#b8b8b8" stroke="#b8b8b8">
  <path d="M1125 575.5 V583" stroke-width="1" fill="none"/><circle cx="1125" cy="586" r="2.6" stroke="none"/>
  <path d="M1132.5 576 V578.5 Q1132.5 581 1134.5 581 Q1136.5 581 1136.5 578.5 V576 M1134.5 581 V589" stroke-width="1.6" fill="none"/>
 </g>
 <g stroke="#b8b8b8" stroke-width="1.2" fill="none">
  <rect x="1123.5" y="614" width="13" height="9"/><path d="M1126.5 614 V612 H1130 V614 M1125.5 617 H1131.5 M1125.5 619.5 H1131.5"/>
 </g>
 <rect x="1133" y="616.5" width="2" height="2" fill="#b8b8b8"/>
 <rect x="1123" y="639" width="14" height="4" rx="1" fill="#b8b8b8"/>
 <rect x="1125" y="643" width="10" height="9.5" fill="#b8b8b8"/>
 <path d="M1126.5 651 L1130 645.5 L1133.5 651Z" fill="#1f1f1f"/>
 <g stroke="#b8b8b8" stroke-width="1.1" fill="none"><path d="M1123.5 670 V680.5 H1133 M1125.5 668 V678.5 H1135"/><rect x="1127.5" y="666.5" width="9.5" height="9.5"/></g>
 <path d="M1128 675.5 L1131.5 670 L1135 675.5Z" fill="#b8b8b8"/><circle cx="1134.5" cy="669.2" r="1" fill="#b8b8b8"/>
 <path d="M1126.5 694.8 Q1123 700 1122.8 702.5 Q1122.8 705.6 1126 705.6 Q1127.8 705.6 1128.3 704.5 Q1127.6 701.5 1129.6 699.8 Q1128.5 697.5 1126.5 694.8Z" fill="#d0d0d0"/>
 <circle cx="1131.5" cy="703.5" r="3.8" stroke="#d0d0d0" stroke-width="1.2" fill="none"/>
 <circle cx="1134.5" cy="696.5" r="2" fill="#d0d0d0"/>
 <circle cx="1130" cy="730" r="6.3" fill="#3a1c22" stroke="#c06a78" stroke-width="1.1"/>
 <path d="M1125.5 726 Q1127.5 723.8 1130.5 724.8 Q1131 727 1128.5 728 Q1127.5 730 1126 731 Q1124.8 729 1125.5 726Z" fill="#b85a6a"/>
 <path d="M1129 730.5 Q1132 729 1134.5 731 Q1134.5 734.5 1131.5 735.5 Q1129.5 735 1129.5 733Z" fill="#b85a6a"/>
 <path d="M1123.3 736.6 L1136.7 722.9" stroke="#d08a94" stroke-width="1"/>
 <rect x="1125" y="761" width="10" height="9.5" fill="#e0904a"/>
 <path d="M1123 761.5 V758.5 H1126 M1134 758.5 H1137 V761.5 M1137 770 V773 H1134 M1126 773 H1123 V770" stroke="#b07040" stroke-width="1" fill="none"/>
 <path d="M1124 799 L1130.5 792.5 Q1129.5 788.5 1133 787.5 L1134.5 787.8 L1132 790.5 L1133.5 792 L1136 789.5 Q1137 793 1133.5 794.5 L1127 801Q1124.5 801.5 1124 799Z" fill="#5a82d0"/>
 <g fill="#5a82d0"><circle cx="1125" cy="816.5" r="2.3"/><circle cx="1125" cy="826.5" r="1.6"/><circle cx="1136" cy="816.5" r="1.6"/><circle cx="1136" cy="826.5" r="2"/></g>
 <path d="M1125 816.5 H1136 M1125 816.5 V826.5 M1125 816.5 L1136 826.5" stroke="#5a82d0" stroke-width="1"/>
 <circle cx="1129" cy="851" r="3" fill="#5a82d0"/><circle cx="1134" cy="845.5" r="1.8" fill="#5a82d0"/>
 <path d="M1134.5 851.5 A5.5 5.5 0 1 1 1130 844.5" stroke="#5a82d0" stroke-width="1.2" fill="none"/>
 <path d="M1124 882 Q1122 876 1127 874 L1134 871.5 Q1137.5 871 1137 875 L1135 881.5 Q1133 886 1127.5 885.5 Q1125 885 1124 882Z" stroke="#5a82d0" stroke-width="1.1" fill="none"/>
 <circle cx="1129" cy="879" r="3" stroke="#5a82d0" stroke-width="1.1" fill="none"/><circle cx="1129" cy="879" r="1.2" fill="#5a82d0"/>
 <g stroke="#30c080" stroke-width="1.1" fill="none"><path d="M1125 899.5 H1135 L1130 909.5Z"/><rect x="1123" y="898" width="3" height="3" fill="#1f1f1f"/><rect x="1134" y="898" width="3" height="3" fill="#1f1f1f"/><rect x="1128.5" y="908" width="3" height="3" fill="#1f1f1f"/></g>
 <circle cx="1130" cy="934.2" r="6.3" fill="#c86070"/>
 <path d="M1130 927.9 V934.2 H1123.7 A6.3 6.3 0 0 1 1130 927.9Z M1130 934.2 H1136.3 A6.3 6.3 0 0 1 1130 940.5Z" fill="#1f1f1f"/>
 <!-- scene header -->
 <path d="M1157.5 573.5 Q1154 579 1153.8 581.5 Q1153.8 584.6 1157 584.6 Q1158.8 584.6 1159.3 583.5 Q1158.6 580.5 1160.6 578.8 Q1159.5 576.5 1157.5 573.5Z" fill="#d8d8d8"/>
 <circle cx="1162.5" cy="582" r="3.8" stroke="#d8d8d8" stroke-width="1.2" fill="none"/>
 <circle cx="1165.5" cy="575" r="2" fill="#d8d8d8"/>
 <g transform="translate(1397.3 578.7) rotate(45)" stroke="#a8a8a8" stroke-width="1" fill="none" stroke-linejoin="round"><path d="M-3.8 -7.5 H3.8 M-2 -7.5 V-2.5 L-4.2 0 H4.2 L2 -2.5 V-7.5 M0 0 V8"/></g>
 <!-- scene panel -->
 <rect x="1151.3" y="597.9" width="254.9" height="110.9" rx="4" fill="#3d3d3d"/>
 <path d="M1160.5 608.5 L1164.5 612.5 L1168.5 608.5" stroke="#d0d0d0" stroke-width="1.1" fill="none"/>
 <g fill="#8a8a8a">
  <rect x="1389" y="609.5" width="1.5" height="1.5"/><rect x="1392" y="609.5" width="1.5" height="1.5"/><rect x="1395" y="609.5" width="1.5" height="1.5"/><rect x="1398" y="609.5" width="1.5" height="1.5"/>
  <rect x="1389" y="612.5" width="1.5" height="1.5"/><rect x="1392" y="612.5" width="1.5" height="1.5"/><rect x="1395" y="612.5" width="1.5" height="1.5"/><rect x="1398" y="612.5" width="1.5" height="1.5"/>
 </g>
 <rect x="1259.9" y="632.1" width="136.9" height="17.7" rx="4" fill="#1d1d1d"/>
 <rect x="1259.9" y="657.4" width="136.9" height="17.2" rx="4" fill="#1d1d1d"/>
 <rect x="1259.9" y="682.4" width="136.9" height="17.4" rx="4" fill="#1d1d1d"/>
 <path d="M1264.5 637.5 V635 H1267 M1272 635 H1274.5 V637.5 M1274.5 644 V646.5 H1272 M1267 646.5 H1264.5 V644" stroke="#d8d8d8" stroke-width="1" fill="none"/>
 <rect x="1266.3" y="636.8" width="6.5" height="7.9" fill="#e0e0e0"/>
 <path d="M1378.5 647.5 L1379 645 L1385.5 638.5 L1388 641 L1381.5 647.5Z" stroke="#d8d8d8" stroke-width="1" fill="none"/><path d="M1384 637 L1389.5 642.5 M1386.5 638.5 L1389.5 635.5 Q1391.5 633.5 1393 635 Q1394.5 636.5 1392.5 638.5 L1389.5 641.5" stroke="#e0e0e0" stroke-width="1.6" fill="#e0e0e0"/>
 <path d="M1267.8 662.3 Q1264.8 667 1264.6 669.3 Q1264.6 672 1267.4 672 Q1269 672 1269.4 671 Q1268.8 668.5 1270.6 667 Q1269.6 665 1267.8 662.3Z" fill="#d8d8d8"/>
 <circle cx="1272.5" cy="669" r="3.3" stroke="#d8d8d8" stroke-width="1.1" fill="none"/>
 <circle cx="1275" cy="663" r="1.7" fill="#d8d8d8"/>
 <rect x="1265" y="690" width="11" height="6.5" fill="#e0e0e0"/>
 <path d="M1265 689 L1266.5 684.5 M1268.5 688.5 L1270 684 M1272 688 L1273.5 683.5 M1265 687.5 L1276 685" stroke="#e0e0e0" stroke-width="1.2"/>
 <!-- other panels -->
<rect x="1151.3" y="711.6" width="254.5" height="24" rx="4" fill="#3d3d3d"/>
<path d="M1162 719.1 L1166 723.6 L1162 728.1" stroke="#d0d0d0" stroke-width="1.1" fill="none"/>
<rect x="1389" y="721.6" width="1.5" height="1.5" fill="#8a8a8a"/><rect x="1389" y="724.6" width="1.5" height="1.5" fill="#8a8a8a"/><rect x="1392" y="721.6" width="1.5" height="1.5" fill="#8a8a8a"/><rect x="1392" y="724.6" width="1.5" height="1.5" fill="#8a8a8a"/><rect x="1395" y="721.6" width="1.5" height="1.5" fill="#8a8a8a"/><rect x="1395" y="724.6" width="1.5" height="1.5" fill="#8a8a8a"/><rect x="1398" y="721.6" width="1.5" height="1.5" fill="#8a8a8a"/><rect x="1398" y="724.6" width="1.5" height="1.5" fill="#8a8a8a"/>
<rect x="1151.3" y="738.6" width="254.5" height="24" rx="4" fill="#3d3d3d"/>
<path d="M1162 746.1 L1166 750.6 L1162 755.1" stroke="#d0d0d0" stroke-width="1.1" fill="none"/>
<rect x="1389" y="748.6" width="1.5" height="1.5" fill="#8a8a8a"/><rect x="1389" y="751.6" width="1.5" height="1.5" fill="#8a8a8a"/><rect x="1392" y="748.6" width="1.5" height="1.5" fill="#8a8a8a"/><rect x="1392" y="751.6" width="1.5" height="1.5" fill="#8a8a8a"/><rect x="1395" y="748.6" width="1.5" height="1.5" fill="#8a8a8a"/><rect x="1395" y="751.6" width="1.5" height="1.5" fill="#8a8a8a"/><rect x="1398" y="748.6" width="1.5" height="1.5" fill="#8a8a8a"/><rect x="1398" y="751.6" width="1.5" height="1.5" fill="#8a8a8a"/>
<rect x="1151.3" y="765.7" width="254.5" height="24" rx="4" fill="#3d3d3d"/>
<path d="M1162 773.2 L1166 777.7 L1162 782.2" stroke="#d0d0d0" stroke-width="1.1" fill="none"/>
<rect x="1389" y="775.7" width="1.5" height="1.5" fill="#8a8a8a"/><rect x="1389" y="778.7" width="1.5" height="1.5" fill="#8a8a8a"/><rect x="1392" y="775.7" width="1.5" height="1.5" fill="#8a8a8a"/><rect x="1392" y="778.7" width="1.5" height="1.5" fill="#8a8a8a"/><rect x="1395" y="775.7" width="1.5" height="1.5" fill="#8a8a8a"/><rect x="1395" y="778.7" width="1.5" height="1.5" fill="#8a8a8a"/><rect x="1398" y="775.7" width="1.5" height="1.5" fill="#8a8a8a"/><rect x="1398" y="778.7" width="1.5" height="1.5" fill="#8a8a8a"/>
<rect x="1151.3" y="792.7" width="254.5" height="24" rx="4" fill="#3d3d3d"/>
<path d="M1162 800.2 L1166 804.7 L1162 809.2" stroke="#d0d0d0" stroke-width="1.1" fill="none"/>
<rect x="1389" y="802.7" width="1.5" height="1.5" fill="#8a8a8a"/><rect x="1389" y="805.7" width="1.5" height="1.5" fill="#8a8a8a"/><rect x="1392" y="802.7" width="1.5" height="1.5" fill="#8a8a8a"/><rect x="1392" y="805.7" width="1.5" height="1.5" fill="#8a8a8a"/><rect x="1395" y="802.7" width="1.5" height="1.5" fill="#8a8a8a"/><rect x="1395" y="805.7" width="1.5" height="1.5" fill="#8a8a8a"/><rect x="1398" y="802.7" width="1.5" height="1.5" fill="#8a8a8a"/><rect x="1398" y="805.7" width="1.5" height="1.5" fill="#8a8a8a"/>
<rect x="1151.3" y="819.7" width="254.5" height="24" rx="4" fill="#3d3d3d"/>
<path d="M1162 827.2 L1166 831.7 L1162 836.2" stroke="#d0d0d0" stroke-width="1.1" fill="none"/>
<rect x="1389" y="829.7" width="1.5" height="1.5" fill="#8a8a8a"/><rect x="1389" y="832.7" width="1.5" height="1.5" fill="#8a8a8a"/><rect x="1392" y="829.7" width="1.5" height="1.5" fill="#8a8a8a"/><rect x="1392" y="832.7" width="1.5" height="1.5" fill="#8a8a8a"/><rect x="1395" y="829.7" width="1.5" height="1.5" fill="#8a8a8a"/><rect x="1395" y="832.7" width="1.5" height="1.5" fill="#8a8a8a"/><rect x="1398" y="829.7" width="1.5" height="1.5" fill="#8a8a8a"/><rect x="1398" y="832.7" width="1.5" height="1.5" fill="#8a8a8a"/>
<rect x="1151.3" y="846.7" width="254.5" height="24" rx="4" fill="#3d3d3d"/>
<path d="M1162 854.2 L1166 858.7 L1162 863.2" stroke="#d0d0d0" stroke-width="1.1" fill="none"/>
<rect x="1389" y="856.7" width="1.5" height="1.5" fill="#8a8a8a"/><rect x="1389" y="859.7" width="1.5" height="1.5" fill="#8a8a8a"/><rect x="1392" y="856.7" width="1.5" height="1.5" fill="#8a8a8a"/><rect x="1392" y="859.7" width="1.5" height="1.5" fill="#8a8a8a"/><rect x="1395" y="856.7" width="1.5" height="1.5" fill="#8a8a8a"/><rect x="1395" y="859.7" width="1.5" height="1.5" fill="#8a8a8a"/><rect x="1398" y="856.7" width="1.5" height="1.5" fill="#8a8a8a"/><rect x="1398" y="859.7" width="1.5" height="1.5" fill="#8a8a8a"/>
<rect x="1151.3" y="873.7" width="254.5" height="24" rx="4" fill="#3d3d3d"/>
<path d="M1162 881.2 L1166 885.7 L1162 890.2" stroke="#d0d0d0" stroke-width="1.1" fill="none"/>
<rect x="1389" y="883.7" width="1.5" height="1.5" fill="#8a8a8a"/><rect x="1389" y="886.7" width="1.5" height="1.5" fill="#8a8a8a"/><rect x="1392" y="883.7" width="1.5" height="1.5" fill="#8a8a8a"/><rect x="1392" y="886.7" width="1.5" height="1.5" fill="#8a8a8a"/><rect x="1395" y="883.7" width="1.5" height="1.5" fill="#8a8a8a"/><rect x="1395" y="886.7" width="1.5" height="1.5" fill="#8a8a8a"/><rect x="1398" y="883.7" width="1.5" height="1.5" fill="#8a8a8a"/><rect x="1398" y="886.7" width="1.5" height="1.5" fill="#8a8a8a"/>
<rect x="1151.3" y="900.7" width="254.5" height="24" rx="4" fill="#3d3d3d"/>
<path d="M1162 908.2 L1166 912.7 L1162 917.2" stroke="#d0d0d0" stroke-width="1.1" fill="none"/>
<rect x="1389" y="910.7" width="1.5" height="1.5" fill="#8a8a8a"/><rect x="1389" y="913.7" width="1.5" height="1.5" fill="#8a8a8a"/><rect x="1392" y="910.7" width="1.5" height="1.5" fill="#8a8a8a"/><rect x="1392" y="913.7" width="1.5" height="1.5" fill="#8a8a8a"/><rect x="1395" y="910.7" width="1.5" height="1.5" fill="#8a8a8a"/><rect x="1395" y="913.7" width="1.5" height="1.5" fill="#8a8a8a"/><rect x="1398" y="910.7" width="1.5" height="1.5" fill="#8a8a8a"/><rect x="1398" y="913.7" width="1.5" height="1.5" fill="#8a8a8a"/>

 <rect x="1172" y="743.2" width="11.6" height="11.6" rx="2.5" fill="#4772b3"/>
 <path d="M1174.5 749 L1177 751.8 L1181.3 746" stroke="#fff" stroke-width="1.5" fill="none"/>
</svg>
<div class="mt" style="left:1177.3px;top:572.4px;color:#e6e6e6">Scene</div>
<div class="mt" style="left:1173.3px;top:604.8px;color:#e6e6e6">Scene</div>
<div class="mt" style="left:1210.3px;top:634.8px;color:#e0e0e0">Camera</div>
<div class="mt" style="left:1160.3px;top:659.8px;color:#e0e0e0">Background Sc...</div>
<div class="mt" style="left:1193px;top:684.8px;color:#e0e0e0">Active Clip</div>
<div class="mt" style="left:1284.8px;top:634.8px;color:#7a7a7a">Object</div>
<div class="mt" style="left:1284.8px;top:659.8px;color:#7a7a7a">Scene</div>
<div class="mt" style="left:1284.8px;top:684.8px;color:#7a7a7a">Movie Clip</div>
<div class="mt" style="left:1229.2px;top:542.5px;color:#6c6c6c">Search</div>
<div class="mt" style="left:1173.3px;top:717.8px;color:#e0e0e0">Units</div>
<div class="mt" style="left:1188.4px;top:744.8px;color:#e0e0e0">Gravity</div>
<div class="mt" style="left:1173.3px;top:771.9px;color:#e0e0e0">Simulation</div>
<div class="mt" style="left:1173.3px;top:798.9px;color:#e0e0e0">Keying Sets</div>
<div class="mt" style="left:1173.3px;top:825.9px;color:#e0e0e0">Audio</div>
<div class="mt" style="left:1173.3px;top:852.9px;color:#e0e0e0">Rigid Body World</div>
<div class="mt" style="left:1173.3px;top:879.9px;color:#e0e0e0">Animation</div>
<div class="mt" style="left:1173.3px;top:906.9px;color:#e0e0e0">Custom Properties</div>
<!-- area outlines -->
<div class="area" style="left:2px;top:58px;width:530px;height:950px;box-shadow:inset 0 0 0 1px rgba(255,255,255,.07)"></div>
<div class="area" style="left:535px;top:58px;width:577px;height:625px;box-shadow:inset 0 0 0 1px rgba(255,255,255,.07)"></div>
<div class="area" style="left:535px;top:686px;width:577px;height:322px;box-shadow:inset 0 0 0 1px rgba(255,255,255,.07)"></div>
<div class="area" style="left:1115px;top:58px;width:294.5px;height:474px;box-shadow:inset 0 0 0 1px rgba(255,255,255,.07)"></div>
<div class="area" style="left:1115px;top:535px;width:294.5px;height:473px;box-shadow:inset 0 0 0 1px rgba(255,255,255,.07)"></div>
<div class="a" style="left:1378px;top:1014.5px;width:32px;height:2.5px;overflow:hidden"><div class="t" style="left:0;top:0;font-size:11px;color:#8a8a8a">4.4.3</div></div>
<div class="a" style="left:0;top:0;width:1px;height:1017px;background:#7c7c7c"></div>

</body></html>
